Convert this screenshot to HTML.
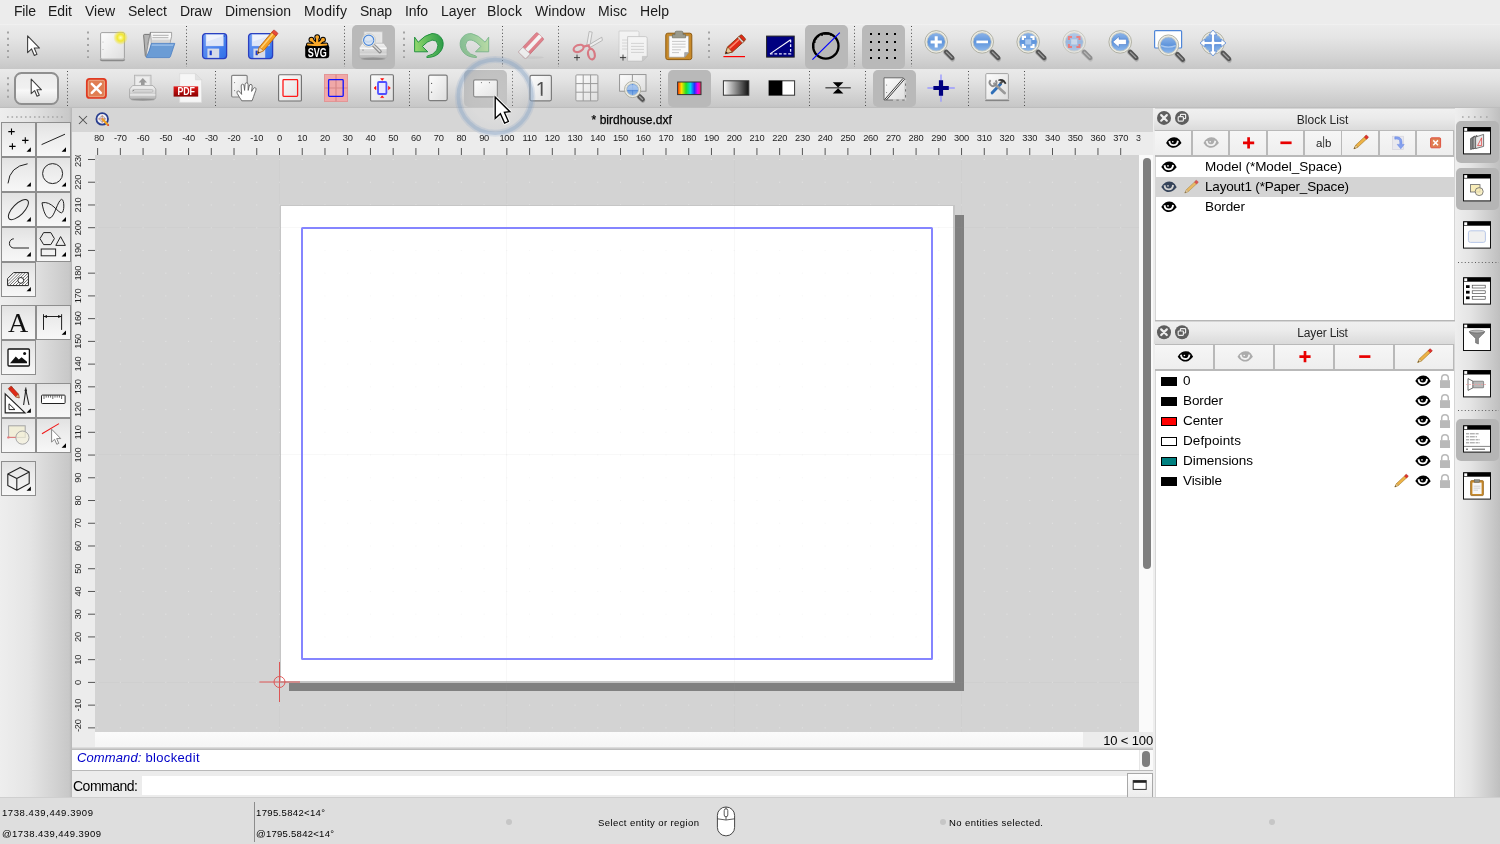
<!DOCTYPE html><html><head><meta charset="utf-8"><title>QCAD - birdhouse.dxf</title><style>
html,body{margin:0;padding:0;}
body{width:1500px;height:844px;position:relative;overflow:hidden;will-change:transform;background:#ececec;font-family:"Liberation Sans",sans-serif;}
div{position:absolute;}
.t{position:absolute;white-space:pre;}
svg{position:absolute;left:0;top:0;}
</style></head><body>
<div style="left:0px;top:0px;width:1500px;height:24px;background:#ececec;"></div><span class="t" id="m0" style="left:14px;top:1.80px;font-size:14px;line-height:18px;color:#1a1a1a;letter-spacing:-0.188px;">File</span><span class="t" id="m1" style="left:48px;top:1.80px;font-size:14px;line-height:18px;color:#1a1a1a;letter-spacing:-0.046px;">Edit</span><span class="t" id="m2" style="left:85px;top:1.80px;font-size:14px;line-height:18px;color:#1a1a1a;letter-spacing:-0.031px;">View</span><span class="t" id="m3" style="left:128px;top:1.80px;font-size:14px;line-height:18px;color:#1a1a1a;letter-spacing:0.016px;">Select</span><span class="t" id="m4" style="left:180px;top:1.80px;font-size:14px;line-height:18px;color:#1a1a1a;letter-spacing:-0.224px;">Draw</span><span class="t" id="m5" style="left:225px;top:1.80px;font-size:14px;line-height:18px;color:#1a1a1a;letter-spacing:-0.018px;">Dimension</span><span class="t" id="m6" style="left:304px;top:1.80px;font-size:14px;line-height:18px;color:#1a1a1a;letter-spacing:0.351px;">Modify</span><span class="t" id="m7" style="left:360px;top:1.80px;font-size:14px;line-height:18px;color:#1a1a1a;letter-spacing:-0.234px;">Snap</span><span class="t" id="m8" style="left:405px;top:1.80px;font-size:14px;line-height:18px;color:#1a1a1a;letter-spacing:-0.120px;">Info</span><span class="t" id="m9" style="left:441px;top:1.80px;font-size:14px;line-height:18px;color:#1a1a1a;letter-spacing:-0.008px;">Layer</span><span class="t" id="m10" style="left:487px;top:1.80px;font-size:14px;line-height:18px;color:#1a1a1a;letter-spacing:0.188px;">Block</span><span class="t" id="m11" style="left:535px;top:1.80px;font-size:14px;line-height:18px;color:#1a1a1a;letter-spacing:0.041px;">Window</span><span class="t" id="m12" style="left:598px;top:1.80px;font-size:14px;line-height:18px;color:#1a1a1a;letter-spacing:0.073px;">Misc</span><span class="t" id="m13" style="left:640px;top:1.80px;font-size:14px;line-height:18px;color:#1a1a1a;letter-spacing:0.067px;">Help</span><div style="left:0px;top:24px;width:1500px;height:44.6px;background:linear-gradient(#f3f3f3,#ebebeb 3%,#e5e5e5 30%,#d3d3d3 75%,#c7c7c7);"></div><div style="left:0px;top:68.6px;width:1500px;height:1px;background:#eeeeee;"></div><div style="left:0px;top:69.4px;width:1500px;height:37px;background:linear-gradient(#eaeaea,#e3e3e3 30%,#d1d1d1 75%,#c8c8c8);"></div><div style="left:0px;top:106.3px;width:1500px;height:1.8px;background:linear-gradient(#cbcbcb,#b9b9b9);"></div><div style="left:0px;top:108px;width:1500px;height:690px;background:#d5d5d5;"></div><div style="left:352px;top:24.5px;width:43px;height:44px;background:#b9b9b9;border-radius:5px;"></div><div style="left:805px;top:24.5px;width:43px;height:44px;background:#b9b9b9;border-radius:5px;"></div><div style="left:861.7px;top:24.5px;width:43px;height:44px;background:#b9b9b9;border-radius:5px;"></div><div style="left:464px;top:70px;width:42.5px;height:37px;background:#b9b9b9;border-radius:5px;"></div><div style="left:668px;top:70px;width:42.5px;height:37px;background:#b9b9b9;border-radius:5px;"></div><div style="left:873px;top:70px;width:42.5px;height:37px;background:#b9b9b9;border-radius:5px;"></div><div style="left:14px;top:72px;width:44.8px;height:32.8px;box-sizing:border-box;border:2px solid #8f8f8f;border-radius:7.5px;background:linear-gradient(#ececec,#f0f0f0 48%,#f8f8f8 56%,#dfdfdf);"></div><div style="left:0px;top:108px;width:72px;height:690px;background:linear-gradient(90deg,#eeeeee,#e5e5e5 40%,#c8c8c8 96%,#b6b6b6);"></div><div style="left:1.1px;top:122.1px;width:34.95px;height:34.95px;box-sizing:border-box;border:1px solid #8e8e8e;background:linear-gradient(#e2e2e2,#ebebeb 35%,#f7f7f7);"></div><div style="left:35.95px;top:122.1px;width:34.95px;height:34.95px;box-sizing:border-box;border:1px solid #8e8e8e;background:linear-gradient(#e2e2e2,#ebebeb 35%,#f7f7f7);"></div><div style="left:1.1px;top:157.0px;width:34.95px;height:34.95px;box-sizing:border-box;border:1px solid #8e8e8e;background:linear-gradient(#e2e2e2,#ebebeb 35%,#f7f7f7);"></div><div style="left:35.95px;top:157.0px;width:34.95px;height:34.95px;box-sizing:border-box;border:1px solid #8e8e8e;background:linear-gradient(#e2e2e2,#ebebeb 35%,#f7f7f7);"></div><div style="left:1.1px;top:191.9px;width:34.95px;height:34.95px;box-sizing:border-box;border:1px solid #8e8e8e;background:linear-gradient(#e2e2e2,#ebebeb 35%,#f7f7f7);"></div><div style="left:35.95px;top:191.9px;width:34.95px;height:34.95px;box-sizing:border-box;border:1px solid #8e8e8e;background:linear-gradient(#e2e2e2,#ebebeb 35%,#f7f7f7);"></div><div style="left:1.1px;top:226.8px;width:34.95px;height:34.95px;box-sizing:border-box;border:1px solid #8e8e8e;background:linear-gradient(#e2e2e2,#ebebeb 35%,#f7f7f7);"></div><div style="left:35.95px;top:226.8px;width:34.95px;height:34.95px;box-sizing:border-box;border:1px solid #8e8e8e;background:linear-gradient(#e2e2e2,#ebebeb 35%,#f7f7f7);"></div><div style="left:1.1px;top:261.7px;width:34.95px;height:34.95px;box-sizing:border-box;border:1px solid #8e8e8e;background:linear-gradient(#e2e2e2,#ebebeb 35%,#f7f7f7);"></div><div style="left:1.1px;top:305.1px;width:34.95px;height:34.95px;box-sizing:border-box;border:1px solid #8e8e8e;background:linear-gradient(#e2e2e2,#ebebeb 35%,#f7f7f7);"></div><div style="left:35.95px;top:305.1px;width:34.95px;height:34.95px;box-sizing:border-box;border:1px solid #8e8e8e;background:linear-gradient(#e2e2e2,#ebebeb 35%,#f7f7f7);"></div><div style="left:1.1px;top:340.0px;width:34.95px;height:34.95px;box-sizing:border-box;border:1px solid #8e8e8e;background:linear-gradient(#e2e2e2,#ebebeb 35%,#f7f7f7);"></div><div style="left:1.1px;top:383.1px;width:34.95px;height:34.95px;box-sizing:border-box;border:1px solid #8e8e8e;background:linear-gradient(#e2e2e2,#ebebeb 35%,#f7f7f7);"></div><div style="left:35.95px;top:383.1px;width:34.95px;height:34.95px;box-sizing:border-box;border:1px solid #8e8e8e;background:linear-gradient(#e2e2e2,#ebebeb 35%,#f7f7f7);"></div><div style="left:1.1px;top:418.0px;width:34.95px;height:34.95px;box-sizing:border-box;border:1px solid #8e8e8e;background:linear-gradient(#e2e2e2,#ebebeb 35%,#f7f7f7);"></div><div style="left:35.95px;top:418.0px;width:34.95px;height:34.95px;box-sizing:border-box;border:1px solid #8e8e8e;background:linear-gradient(#e2e2e2,#ebebeb 35%,#f7f7f7);"></div><div style="left:1.1px;top:461.1px;width:34.95px;height:34.95px;box-sizing:border-box;border:1px solid #8e8e8e;background:linear-gradient(#e2e2e2,#ebebeb 35%,#f7f7f7);"></div><div style="left:72px;top:108px;width:1081px;height:23.5px;background:#d6d6d6;"></div><span class="t" id="title" style="left:591.6px;top:112.00px;font-size:12px;line-height:16px;color:#000;letter-spacing:0.017px;-webkit-text-stroke:0.25px #000;">* birdhouse.dxf</span><div style="left:72px;top:131.5px;width:1081px;height:23.5px;background:#ececec;"></div><div style="left:72px;top:155px;width:23px;height:577px;background:#ececec;"></div><div style="left:95px;top:155px;width:1044px;height:577px;background:#d3d3d3;overflow:hidden;"><div style="left:0;top:0;width:1044px;height:577px;background-image:radial-gradient(circle,rgba(255,255,255,0.38) 0.55px,rgba(255,255,255,0) 1px);background-size:22.735px 22.735px;background-position:-8.75px -6.87px;"></div><div style="left:194px;top:60px;width:674.8px;height:476.2px;background:#808080;"></div><div style="left:185px;top:50px;width:675.2px;height:478px;background:#c6c6c6;"></div><div style="left:186px;top:51px;width:672.2px;height:475px;background-color:#fff;background-image:radial-gradient(circle,rgba(0,0,0,0.035) 0.55px,rgba(0,0,0,0) 1px);background-size:22.735px 22.735px;background-position:9.87px 10.33px;"></div><div style="left:411.0px;top:0px;width:1px;height:577px;background:rgba(150,150,150,0.07);"></div><div style="left:638.5px;top:0px;width:1px;height:577px;background:rgba(150,150,150,0.07);"></div><div style="left:866.0px;top:0px;width:1px;height:577px;background:rgba(150,150,150,0.07);"></div><div style="left:0px;top:71.5px;width:1045px;height:1px;background:rgba(150,150,150,0.07);"></div><div style="left:0px;top:299.0px;width:1045px;height:1px;background:rgba(150,150,150,0.07);"></div><div style="left:184px;top:0px;width:1px;height:577px;background:rgba(150,150,150,0.07);"></div><div style="left:0px;top:526.5px;width:1045px;height:1px;background:rgba(150,150,150,0.07);"></div><div style="left:206.3px;top:71.6px;width:631.6px;height:433.7px;box-sizing:border-box;border:2.5px solid #8585ff;border-radius:1.5px;"></div></div><div style="left:1139px;top:155px;width:14.3px;height:577px;background:#fafafa;"></div><div style="left:1143px;top:158px;width:8.2px;height:410.8px;background:#7f7f7f;border-radius:4.1px;"></div><div style="left:95px;top:732px;width:1044px;height:14.5px;background:linear-gradient(#fbfbfb,#f5f5f5);"></div><div style="left:72px;top:732px;width:23px;height:14.5px;background:#ececec;"></div><div style="left:1083px;top:732px;width:70.3px;height:14.5px;background:#ececec;"></div><span class="t" id="zoomlbl" style="right:347px;top:731.50px;font-size:13px;line-height:17px;color:#000;letter-spacing:-0.139px;">10 &lt; 100</span><div style="left:72px;top:746.5px;width:1081.3px;height:3px;background:linear-gradient(#e4e4e4,#b4b4b4);"></div><div style="left:72px;top:749.5px;width:1081.3px;height:20.5px;background:#fff;"></div><div style="left:72px;top:770px;width:1081.3px;height:1px;background:#b9b9b9;"></div><div style="left:72px;top:771px;width:1081.3px;height:27px;background:#ececec;"></div><div style="left:1138.5px;top:749.5px;width:14.8px;height:20.5px;background:#fafafa;border-left:1px solid #e6e6e6;"></div><div style="left:1142.2px;top:750.5px;width:8px;height:16.5px;background:#7f7f7f;border-radius:4px;"></div><span class="t" id="cmdhist1" style="left:77px;top:749.40px;font-size:13px;line-height:17px;color:#0000c8;letter-spacing:0.117px;font-style:italic;">Command:</span><span class="t" id="cmdhist2" style="left:145.5px;top:749.40px;font-size:13px;line-height:17px;color:#0000c8;letter-spacing:0.336px;">blockedit</span><span class="t" id="cmdlbl" style="left:73px;top:776.50px;font-size:14px;line-height:18px;color:#000;letter-spacing:-0.498px;">Command:</span><div style="left:142px;top:776px;width:985px;height:18.5px;background:#fff;"></div><div style="left:1127px;top:772.5px;width:26px;height:25px;box-sizing:border-box;border:1px solid #a8a8a8;background:linear-gradient(#fdfdfd,#ececec);"></div><div style="left:1153.3px;top:108px;width:2.2px;height:690px;background:#eeeeee;"></div><div style="left:1155px;top:108px;width:1px;height:690px;background:#d6d6d6;"></div><div style="left:1154px;top:108.5px;width:300.5px;height:22px;background:linear-gradient(#f0f0f0,#ebebeb 40%,#dadada);"></div><span class="t" id="blt" style="left:1322.5px;transform:translateX(-50%);top:111.80px;font-size:12px;line-height:16px;color:#262626;letter-spacing:0.016px;">Block List</span><div style="left:1154.8px;top:130px;width:299.7px;height:26.8px;background:#b9b9b9;"></div><div style="left:1155.3px;top:130.8px;width:35.7px;height:24px;background:linear-gradient(#f6f6f6,#eeeeee);"></div><div style="left:1192.7px;top:130.8px;width:35.7px;height:24px;background:linear-gradient(#f6f6f6,#eeeeee);"></div><div style="left:1230.1px;top:130.8px;width:35.7px;height:24px;background:linear-gradient(#f6f6f6,#eeeeee);"></div><div style="left:1267.5px;top:130.8px;width:35.7px;height:24px;background:linear-gradient(#f6f6f6,#eeeeee);"></div><div style="left:1304.9px;top:130.8px;width:35.7px;height:24px;background:linear-gradient(#f6f6f6,#eeeeee);"></div><div style="left:1342.3px;top:130.8px;width:35.7px;height:24px;background:linear-gradient(#f6f6f6,#eeeeee);"></div><div style="left:1379.7px;top:130.8px;width:35.7px;height:24px;background:linear-gradient(#f6f6f6,#eeeeee);"></div><div style="left:1417.1px;top:130.8px;width:35.7px;height:24px;background:linear-gradient(#f6f6f6,#eeeeee);"></div><div style="left:1156px;top:156.8px;width:298px;height:163.4px;background:#fff;"></div><div style="left:1156px;top:177px;width:298px;height:20px;background:#d4d4d4;"></div><span class="t" id="b0" style="left:1205px;top:158.05px;font-size:13.5px;line-height:17.5px;color:#000;letter-spacing:-0.017px;">Model (*Model_Space)</span><span class="t" id="b1" style="left:1205px;top:178.05px;font-size:13.5px;line-height:17.5px;color:#000;letter-spacing:-0.184px;">Layout1 (*Paper_Space)</span><span class="t" id="b2" style="left:1205px;top:198.05px;font-size:13.5px;line-height:17.5px;color:#000;letter-spacing:-0.106px;">Border</span><div style="left:1154.5px;top:320.2px;width:300px;height:1.3px;background:#b6b6b6;"></div><div style="left:1154px;top:321.5px;width:300.5px;height:22.5px;background:linear-gradient(#f0f0f0,#ebebeb 40%,#dadada);"></div><span class="t" id="llt" style="left:1322.5px;transform:translateX(-50%);top:325.05px;font-size:12px;line-height:16px;color:#262626;letter-spacing:-0.170px;">Layer List</span><div style="left:1154.8px;top:343.8px;width:299.7px;height:26.9px;background:#b9b9b9;"></div><div style="left:1155.3px;top:344.6px;width:58.0px;height:24.2px;background:linear-gradient(#f6f6f6,#eeeeee);"></div><div style="left:1215.1px;top:344.6px;width:58.0px;height:24.2px;background:linear-gradient(#f6f6f6,#eeeeee);"></div><div style="left:1275.0px;top:344.6px;width:58.0px;height:24.2px;background:linear-gradient(#f6f6f6,#eeeeee);"></div><div style="left:1334.8px;top:344.6px;width:58.0px;height:24.2px;background:linear-gradient(#f6f6f6,#eeeeee);"></div><div style="left:1394.7px;top:344.6px;width:58.0px;height:24.2px;background:linear-gradient(#f6f6f6,#eeeeee);"></div><div style="left:1156px;top:370.7px;width:298px;height:427.3px;background:#fff;"></div><div style="left:1161px;top:376.5px;width:16px;height:9px;box-sizing:border-box;border:1px solid #000;background:#000;"></div><span class="t" id="l0" style="left:1183px;top:372.05px;font-size:13.5px;line-height:17.5px;color:#000;letter-spacing:0.484px;">0</span><div style="left:1161px;top:396.5px;width:16px;height:9px;box-sizing:border-box;border:1px solid #000;background:#000;"></div><span class="t" id="l1" style="left:1183px;top:392.05px;font-size:13.5px;line-height:17.5px;color:#000;letter-spacing:-0.106px;">Border</span><div style="left:1161px;top:416.5px;width:16px;height:9px;box-sizing:border-box;border:1px solid #000;background:#ff0000;"></div><span class="t" id="l2" style="left:1183px;top:412.05px;font-size:13.5px;line-height:17.5px;color:#000;letter-spacing:-0.106px;">Center</span><div style="left:1161px;top:436.5px;width:16px;height:9px;box-sizing:border-box;border:1px solid #000;background:#fff;"></div><span class="t" id="l3" style="left:1183px;top:432.05px;font-size:13.5px;line-height:17.5px;color:#000;letter-spacing:0.119px;">Defpoints</span><div style="left:1161px;top:456.5px;width:16px;height:9px;box-sizing:border-box;border:1px solid #000;background:#008080;"></div><span class="t" id="l4" style="left:1183px;top:452.05px;font-size:13.5px;line-height:17.5px;color:#000;letter-spacing:-0.059px;">Dimensions</span><div style="left:1161px;top:476.5px;width:16px;height:9px;box-sizing:border-box;border:1px solid #000;background:#000;"></div><span class="t" id="l5" style="left:1183px;top:472.05px;font-size:13.5px;line-height:17.5px;color:#000;letter-spacing:-0.089px;">Visible</span><div style="left:1454.5px;top:108px;width:45.5px;height:690px;background:linear-gradient(90deg,#eeeeee,#e4e4e4 35%,#bfbfbf);"></div><div style="left:1456px;top:120.5px;width:43px;height:42px;background:#b5b5b5;border-radius:5px;"></div><div style="left:1456px;top:167.5px;width:43px;height:42px;background:#b5b5b5;border-radius:5px;"></div><div style="left:1456px;top:418.5px;width:43px;height:42px;background:#b5b5b5;border-radius:5px;"></div><div style="left:0px;top:798px;width:1500px;height:46px;background:#dedede;"></div><div style="left:0px;top:797.4px;width:1500px;height:1px;background:#cfcfcf;"></div><div style="left:253.5px;top:802px;width:1px;height:40px;background:#8c8c8c;"></div><span class="t" id="s0" style="left:2px;top:805.75px;font-size:9.5px;line-height:13.5px;color:#000;letter-spacing:0.569px;">1738.439,449.3909</span><span class="t" id="s1" style="left:2px;top:826.55px;font-size:9.5px;line-height:13.5px;color:#000;letter-spacing:0.439px;">@1738.439,449.3909</span><span class="t" id="s2" style="left:256px;top:805.75px;font-size:9.5px;line-height:13.5px;color:#000;letter-spacing:0.347px;">1795.5842&lt;14°</span><span class="t" id="s3" style="left:256px;top:826.55px;font-size:9.5px;line-height:13.5px;color:#000;letter-spacing:0.271px;">@1795.5842&lt;14°</span><span class="t" id="s4" style="left:598px;top:815.75px;font-size:9.5px;line-height:13.5px;color:#000;letter-spacing:0.414px;">Select entity or region</span><span class="t" id="s5" style="left:949px;top:815.75px;font-size:9.5px;line-height:13.5px;color:#000;letter-spacing:0.422px;">No entities selected.</span><div style="left:506px;top:819px;width:6px;height:6px;background:#c6c6c6;border-radius:3px;"></div><div style="left:940px;top:819px;width:6px;height:6px;background:#c6c6c6;border-radius:3px;"></div><div style="left:1269px;top:819px;width:6px;height:6px;background:#c6c6c6;border-radius:3px;"></div>
<svg width="1500" height="844" viewBox="0 0 1500 844"><defs>
<linearGradient id="gPage" x1="0" y1="0" x2="1" y2="1"><stop offset="0" stop-color="#fdfdfd"/><stop offset="1" stop-color="#dedede"/></linearGradient>
<linearGradient id="gBlue" x1="0" y1="0" x2="0" y2="1"><stop offset="0" stop-color="#9cc0ec"/><stop offset="1" stop-color="#4f86d0"/></linearGradient>
<linearGradient id="gLens" x1="0" y1="0" x2="0" y2="1"><stop offset="0" stop-color="#8db4e8"/><stop offset="0.5" stop-color="#5f95dc"/><stop offset="1" stop-color="#8fb8ea"/></linearGradient>
<linearGradient id="gFloppy" x1="0" y1="0" x2="1" y2="1"><stop offset="0" stop-color="#6f9cf5"/><stop offset="1" stop-color="#2f6fe8"/></linearGradient>
<linearGradient id="gGreen" x1="0" y1="0" x2="1" y2="1"><stop offset="0" stop-color="#7fd07a"/><stop offset="1" stop-color="#1d8f35"/></linearGradient>
<linearGradient id="gRain" x1="0" y1="0" x2="1" y2="0"><stop offset="0" stop-color="#ff3000"/><stop offset="0.17" stop-color="#ffe000"/><stop offset="0.36" stop-color="#20e020"/><stop offset="0.55" stop-color="#00d8e8"/><stop offset="0.72" stop-color="#2030ff"/><stop offset="0.86" stop-color="#f000f0"/><stop offset="1" stop-color="#ff2050"/></linearGradient>
<linearGradient id="gGray" x1="0" y1="0" x2="1" y2="0"><stop offset="0" stop-color="#fff"/><stop offset="1" stop-color="#111"/></linearGradient>
<linearGradient id="gPrn" x1="0" y1="0" x2="0" y2="1"><stop offset="0" stop-color="#f4f4f4"/><stop offset="1" stop-color="#b9b9b9"/></linearGradient>
<linearGradient id="gPdf" x1="0" y1="0" x2="0" y2="1"><stop offset="0" stop-color="#e01818"/><stop offset="1" stop-color="#8a0000"/></linearGradient>
<radialGradient id="gGlow"><stop offset="0" stop-color="#ffffc0"/><stop offset="0.45" stop-color="#f2e830"/><stop offset="1" stop-color="#f0e020" stop-opacity="0"/></radialGradient>
<clipPath id="clipH"><rect x="94.4" y="131" width="1046.1" height="24"/></clipPath>
<clipPath id="clipV"><rect x="72" y="155" width="23" height="578.5"/></clipPath>
</defs>
<line x1="8" y1="31.6" x2="8" y2="58" stroke="#a3a3a3" stroke-width="2" stroke-dasharray="2 4.15"/>
<line x1="88" y1="31.6" x2="88" y2="58" stroke="#a3a3a3" stroke-width="2" stroke-dasharray="2 4.15"/>
<line x1="404" y1="31.6" x2="404" y2="58" stroke="#a3a3a3" stroke-width="2" stroke-dasharray="2 4.15"/>
<line x1="709" y1="31.6" x2="709" y2="58" stroke="#a3a3a3" stroke-width="2" stroke-dasharray="2 4.15"/>
<line x1="186.5" y1="26" x2="186.5" y2="67" stroke="#4a4a4a" stroke-width="1" stroke-dasharray="1 2.4"/>
<line x1="344.5" y1="26" x2="344.5" y2="67" stroke="#4a4a4a" stroke-width="1" stroke-dasharray="1 2.4"/>
<line x1="502.5" y1="26" x2="502.5" y2="67" stroke="#4a4a4a" stroke-width="1" stroke-dasharray="1 2.4"/>
<line x1="558.5" y1="26" x2="558.5" y2="67" stroke="#4a4a4a" stroke-width="1" stroke-dasharray="1 2.4"/>
<line x1="854.5" y1="26" x2="854.5" y2="67" stroke="#4a4a4a" stroke-width="1" stroke-dasharray="1 2.4"/>
<line x1="911.5" y1="26" x2="911.5" y2="67" stroke="#4a4a4a" stroke-width="1" stroke-dasharray="1 2.4"/>
<line x1="8" y1="77.2" x2="8" y2="98" stroke="#a3a3a3" stroke-width="2" stroke-dasharray="2 4.15"/>
<line x1="67.5" y1="71" x2="67.5" y2="106" stroke="#4a4a4a" stroke-width="1" stroke-dasharray="1 2.4"/>
<line x1="215.5" y1="71" x2="215.5" y2="106" stroke="#4a4a4a" stroke-width="1" stroke-dasharray="1 2.4"/>
<line x1="409.5" y1="71" x2="409.5" y2="106" stroke="#4a4a4a" stroke-width="1" stroke-dasharray="1 2.4"/>
<line x1="512.5" y1="71" x2="512.5" y2="106" stroke="#4a4a4a" stroke-width="1" stroke-dasharray="1 2.4"/>
<line x1="660.5" y1="71" x2="660.5" y2="106" stroke="#4a4a4a" stroke-width="1" stroke-dasharray="1 2.4"/>
<line x1="809.5" y1="71" x2="809.5" y2="106" stroke="#4a4a4a" stroke-width="1" stroke-dasharray="1 2.4"/>
<line x1="865.5" y1="71" x2="865.5" y2="106" stroke="#4a4a4a" stroke-width="1" stroke-dasharray="1 2.4"/>
<line x1="968.5" y1="71" x2="968.5" y2="106" stroke="#4a4a4a" stroke-width="1" stroke-dasharray="1 2.4"/>
<line x1="1024.5" y1="71" x2="1024.5" y2="106" stroke="#4a4a4a" stroke-width="1" stroke-dasharray="1 2.4"/>
<line x1="7" y1="117" x2="65" y2="117" stroke="#a6a6a6" stroke-width="1.6" stroke-dasharray="1.6 2.9"/>
<line x1="1462" y1="117" x2="1490" y2="117" stroke="#a6a6a6" stroke-width="1.6" stroke-dasharray="1.6 4.4"/>
<line x1="1458" y1="262.5" x2="1499" y2="262.5" stroke="#5a5a5a" stroke-width="1" stroke-dasharray="1 2.4"/>
<line x1="1458" y1="410.5" x2="1499" y2="410.5" stroke="#5a5a5a" stroke-width="1" stroke-dasharray="1 2.4"/>
<path transform="translate(27.6,35.8) scale(1.02)" d="M0,0 L0,16.5 L3.9,12.9 L6.6,19.3 L9.2,18.2 L6.5,12 L11.7,12 Z" fill="#fff" stroke="#404040" stroke-width="1.0784313725490198" stroke-linejoin="round"/>
<rect x="100.6" y="32.6" width="23.8" height="26.6" rx="1.3" fill="url(#gPage)" stroke="#a2a2a2" stroke-width="1"/>
<path d="M100.4,59.4 Q100.6,60.6 102,60.6 H123 Q124.4,60.6 124.6,59.4" stroke="#7e7e7e" stroke-width="1.3" fill="none" opacity="0.85"/>
<circle cx="103" cy="42" r="0.5" fill="#aaa"/><circle cx="103" cy="49.5" r="0.5" fill="#aaa"/>
<circle cx="120.6" cy="37.6" r="7.4" fill="url(#gGlow)"/>
<g>
<path d="M143.6,35.2 Q143.6,34.4 144.6,34.4 H149.4 L150.6,36 V56.6 H146.4 Q145.4,56.6 145.3,55.6 Z" fill="#b4b4b4" stroke="#6c6c6c" stroke-width="0.9" stroke-linejoin="round"/>
<path d="M150.4,32.4 H171.6 V36.4 L169.6,44.4 H147.6 Z" fill="#f8f8f8" stroke="#8e8e8e" stroke-width="0.8" stroke-linejoin="round"/>
<path d="M150.4,32.4 L146.2,54.6 L148,55.6 L151.6,44 Z" fill="#e9e9e9" stroke="#7c7c7c" stroke-width="0.7" stroke-linejoin="round"/>
<path d="M152.8,35.4 H168.6 M152.4,37.6 H168.4" stroke="#bdbdbd" stroke-width="1.2"/>
<path d="M151,39.4 H170.4 L169.4,43.4 H150.2Z" fill="#c9c9c9" opacity="0.75"/>
<path d="M151.4,43.4 H174.8 L170.4,56.6 Q170,57.6 169,57.6 H146.6 Q146,57.4 146.4,56.6 Q149.4,52 151.4,43.4Z" fill="#6b9cd5" stroke="#4a7fc4" stroke-width="0.8" stroke-linejoin="round"/>
<path d="M151.9,44.3 H173.6 L173,46 H151.5Z" fill="#9cc0ea" opacity="0.8"/>
</g>
<g transform="translate(202,33)" >
<rect x="0.6" y="0.6" width="24" height="25" rx="3" fill="url(#gFloppy)" stroke="#2a3fc0" stroke-width="1.3"/>
<rect x="4" y="1.6" width="17.2" height="11.3" fill="#eef2fc" stroke="#b8c8ee" stroke-width="0.5"/>
<path d="M4,9 L21.2,3 L21.2,12.9 L4,12.9Z" fill="#d9e2f8" opacity="0.8"/>
<rect x="5.4" y="15.6" width="11.8" height="9.2" fill="#d6dbe8"/>
<rect x="7.6" y="17.6" width="2.2" height="4.6" fill="#1c3fd0"/>
<rect x="21.8" y="2.6" width="1" height="1" fill="#1c3fb0"/>
</g>
<g transform="translate(248,33)" >
<rect x="0.6" y="0.6" width="24" height="25" rx="3" fill="url(#gFloppy)" stroke="#2a3fc0" stroke-width="1.3"/>
<rect x="4" y="1.6" width="17.2" height="11.3" fill="#eef2fc" stroke="#b8c8ee" stroke-width="0.5"/>
<path d="M4,9 L21.2,3 L21.2,12.9 L4,12.9Z" fill="#d9e2f8" opacity="0.8"/>
<rect x="5.4" y="15.6" width="11.8" height="9.2" fill="#d6dbe8"/>
<rect x="7.6" y="17.6" width="2.2" height="4.6" fill="#1c3fd0"/>
<rect x="21.8" y="2.6" width="1" height="1" fill="#1c3fb0"/>
</g>
<g transform="translate(266,43.5)" ><g transform="rotate(40)">
<path d="M-2.8,-13 L2.8,-13 L2.8,7 L0,13 L-2.8,7Z" fill="#f5a020" stroke="#b86810" stroke-width="0.8"/>
<path d="M-0.9,-12 L-0.9,7.5" stroke="#ffd27a" stroke-width="1.4"/>
<rect x="-2.8" y="-15.6" width="5.6" height="3.4" rx="1" fill="#e84a3a" stroke="#b02a20" stroke-width="0.6"/>
<path d="M-2.8,7 L0,13 L2.8,7Z" fill="#f0d8b0" stroke="#b86810" stroke-width="0.6"/>
<path d="M-1,10.8 L0,13 L1,10.8Z" fill="#333"/></g></g>
<g transform="translate(305,34)" >
<path d="M2.6,10.8 H21.8 Q24.2,10.8 24.2,13.2 V21.8 Q24.2,24.2 21.8,24.2 H2.6 Q0.2,24.2 0.2,21.8 V13.2 Q0.2,10.8 2.6,10.8Z" fill="#000"/>
<g stroke="#000" stroke-linecap="round" fill="none">
<path d="M12.2,11.4 V3.2 M12.2,11.4 L6.5,5.8 M12.2,11.4 L17.9,5.8" stroke-width="4.4"/>
<path d="M12.2,11.2 L3,10.6 M12.2,11.2 L21.4,10.6" stroke-width="4"/>
<circle cx="12.2" cy="3.1" r="2.9" fill="#000" stroke="none"/><circle cx="6.4" cy="5.7" r="2.9" fill="#000" stroke="none"/><circle cx="18" cy="5.7" r="2.9" fill="#000" stroke="none"/>
</g>
<g stroke="#f9a829" stroke-linecap="round" fill="none">
<path d="M12.2,11.4 V3.2 M12.2,11.4 L6.5,5.8 M12.2,11.4 L17.9,5.8" stroke-width="2.3"/>
<path d="M12.2,11.2 L3,10.6 M12.2,11.2 L21.4,10.6" stroke-width="2"/>
<circle cx="12.2" cy="3.1" r="1.9" fill="#f9a829" stroke="none"/><circle cx="6.4" cy="5.7" r="1.9" fill="#f9a829" stroke="none"/><circle cx="18" cy="5.7" r="1.9" fill="#f9a829" stroke="none"/>
<path d="M8.4,10.6 L12.2,7.4 L16,10.6Z" fill="#f9a829" stroke="none"/>
</g>
<rect x="0.6" y="12.2" width="23.2" height="3" fill="#000"/>
<text x="12.3" y="23.4" font-family="Liberation Sans, sans-serif" font-weight="bold" font-size="13.6" fill="#fff" text-anchor="middle" textLength="19" lengthAdjust="spacingAndGlyphs">SVG</text>
</g>
<g transform="translate(359,32)" >
<rect x="5" y="-0.2" width="18.3" height="13" fill="#ececec" stroke="#c6c6c6" stroke-width="0.8"/>
<rect x="12" y="1.4" width="9.6" height="9" fill="#e2e2e2" opacity="0.8"/>
<path d="M3.2,11.2 L24.8,11.2 L28,15.4 L28,24.2 Q28,25.8 26.4,25.8 L1.9,25.8 Q0.3,25.8 0.3,24.2 L0.3,15.4Z" fill="url(#gPrn)" stroke="#b2b2b2" stroke-width="0.7"/>
<rect x="0.8" y="15.6" width="26.8" height="1.3" fill="#fff" opacity="0.9"/>
<rect x="0.8" y="21.6" width="26.8" height="1" fill="#fff" opacity="0.6"/>
<circle cx="4" cy="18" r="0.6" fill="#666"/>
<ellipse cx="14.2" cy="26.8" rx="12.4" ry="1.2" fill="#000" opacity="0.2"/>
<line x1="14.2" y1="13" x2="21" y2="19.6" stroke="#8e8e8e" stroke-width="3.6" stroke-linecap="round"/>
<line x1="14.6" y1="13.2" x2="20.8" y2="19.2" stroke="#d9d9d9" stroke-width="1.5" stroke-linecap="round"/>
<circle cx="9.7" cy="8.3" r="6.8" fill="#f1f1ee" stroke="#c4c4bc" stroke-width="0.8"/>
<circle cx="9.7" cy="8.3" r="5.1" fill="#dbe6f4" stroke="#4a86d8" stroke-width="1.2"/>
<path d="M5.6,8.8 Q9.6,11.6 14,8" stroke="#c2d6ee" stroke-width="2" fill="none" opacity="0.9"/>
</g>
<linearGradient id="gUndo" gradientUnits="userSpaceOnUse" x1="414" y1="48" x2="444" y2="44"><stop offset="0" stop-color="#97da6e"/><stop offset="0.45" stop-color="#62bd5c"/><stop offset="1" stop-color="#2c9a48"/></linearGradient>
<path d="M414.6,37.1 L418.2,42.2 Q424.5,35 432,33.5 Q439.5,33.4 442.5,40 Q444.6,46 440.4,51.8 Q436,57.4 426.9,57.5 Q426.2,56.6 427.5,56 Q433.4,55 436.8,50 Q439.4,44.8 436.2,41 Q432.4,38.6 427.2,42.2 L422.4,46.4 L427.8,51.8 L414.6,51.8 Z" fill="url(#gUndo)" stroke="#178a38" stroke-width="0.9" stroke-linejoin="round"/>
<g transform="translate(903.3,0) scale(-1,1)" opacity="0.5"><path d="M414.6,37.1 L418.2,42.2 Q424.5,35 432,33.5 Q439.5,33.4 442.5,40 Q444.6,46 440.4,51.8 Q436,57.4 426.9,57.5 Q426.2,56.6 427.5,56 Q433.4,55 436.8,50 Q439.4,44.8 436.2,41 Q432.4,38.6 427.2,42.2 L422.4,46.4 L427.8,51.8 L414.6,51.8 Z" fill="url(#gUndo)" stroke="#178a38" stroke-width="0.9" stroke-linejoin="round"/></g>
<g transform="translate(518,32)" ><g opacity="0.62">
<ellipse cx="15" cy="25.6" rx="11" ry="1.4" fill="#b9b9b9" opacity="0.6"/>
<g transform="translate(13.5,13.2) rotate(-47)">
<rect x="-14" y="-5" width="27" height="10" rx="1.2" fill="#e04858" stroke="#b02838" stroke-width="0.7"/>
<rect x="-7" y="-1.9" width="20" height="4" fill="#fff"/>
<rect x="-14" y="-5" width="6.6" height="10" rx="1" fill="#fafafa" stroke="#aaa" stroke-width="0.7"/>
</g></g></g>
<g transform="translate(572,30)" ><g opacity="0.62">
<path d="M17.2,1.5 L20.2,2.2 L17.6,17 L14.6,16.2Z" fill="#f4f4f4" stroke="#8a8a8a" stroke-width="0.8"/>
<path d="M29.8,7.2 L30.4,10.4 L18.6,17.2 L16.4,15.2Z" fill="#f4f4f4" stroke="#8a8a8a" stroke-width="0.8"/>
<ellipse cx="6.6" cy="18.4" rx="5.2" ry="3.3" transform="rotate(-22 6.6 18.4)" fill="none" stroke="#d84050" stroke-width="2.2"/>
<ellipse cx="19.4" cy="24.2" rx="3.3" ry="5.3" transform="rotate(-12 19.4 24.2)" fill="none" stroke="#d84050" stroke-width="2.2"/>
<path d="M11.4,16.6 L16.6,15.4 L18.2,19.2" fill="none" stroke="#d84050" stroke-width="2.2" stroke-linejoin="round"/>
</g>
<path d="M2,27.6 H8 M5,24.6 V30.6" stroke="#333" stroke-width="0.9"/></g>
<g transform="translate(618,30)" ><g opacity="0.75">
<path d="M1,1 H19.5 Q21,1 21,2.5 V27 H1Z" fill="#f7f7f7" stroke="#c4c4c4" stroke-width="0.8"/>
<path d="M4,10 H12 M4,13 H12 M4,16 H12 M4,19 H12" stroke="#d2d2d2" stroke-width="1"/>
<path d="M9.6,6.6 H27.5 Q29.2,6.6 29.2,8.2 V26.4 L24.4,31.2 H9.6Z" fill="#fafafa" stroke="#b5b5b5" stroke-width="0.8"/>
<path d="M13,13.4 H26 M13,16.4 H26 M13,19.4 H26 M13,22.4 H26" stroke="#cfcfcf" stroke-width="1"/>
<path d="M24.4,31.2 L24.4,26.4 L29.2,26.4Z" fill="#c9c9c9" stroke="#b5b5b5" stroke-width="0.6"/>
</g>
<path d="M2,27.6 H8 M5,24.6 V30.6" stroke="#333" stroke-width="0.9"/></g>
<g transform="translate(665,30)" >
<rect x="0.8" y="3.2" width="26" height="26.4" rx="2" fill="#c88a2a" stroke="#8e5a10" stroke-width="1"/>
<path d="M4,6 H23.6 V22.6 L19.6,27.2 H4Z" fill="#fafafa" stroke="#9a9a9a" stroke-width="0.6"/>
<path d="M7,11.4 H20.6 M7,14.2 H20.6 M7,17 H20.6 M7,19.8 H16 M7,22.6 H14" stroke="#c2c2c2" stroke-width="0.9"/>
<path d="M19.6,27.2 V22.6 H23.6Z" fill="#aaa" stroke="#8a8a8a" stroke-width="0.5"/>
<path d="M7.4,7.8 V4.6 H10 V2.6 Q10,1.2 11.6,1.2 H16.4 Q18,1.2 18,2.6 V4.6 H20.6 V7.8Z" fill="#9a9a8c" stroke="#6e6e62" stroke-width="0.7"/>
</g>
<g transform="translate(723,34)" >
<line x1="0.4" y1="22.6" x2="22" y2="22.6" stroke="#ff0000" stroke-width="1.2"/>
<g transform="translate(11.2,11.6) rotate(47.5) scale(0.95)">
<path d="M-3.7,-11 L3.7,-11 L3.7,6 L0,12.6 L-3.7,6Z" fill="#e02a18" stroke="#7a3a10" stroke-width="0.8"/>
<path d="M-1.2,-10 V6.4" stroke="#ff8a70" stroke-width="1.5"/>
<rect x="-3.7" y="-10.4" width="7.4" height="2.2" fill="#d8d8d8" stroke="#7a3a10" stroke-width="0.4"/>
<rect x="-3.7" y="-13.6" width="7.4" height="3.2" rx="1.5" fill="#e02a18" stroke="#7a3a10" stroke-width="0.7"/>
<path d="M-3.7,6 L0,12.6 L3.7,6Z" fill="#e8c898" stroke="#7a3a10" stroke-width="0.7"/>
<path d="M-1.1,10.2 L0,12.6 L1.1,10.2Z" fill="#222"/></g></g>
<g transform="translate(766,35.5)" >
<rect x="0.6" y="0.6" width="27.6" height="21" fill="#000080" stroke="#222" stroke-width="1"/>
<path d="M4,18.4 L24.6,4.2" stroke="#fff" stroke-width="1.1" fill="none"/>
<path d="M24.6,4.2 V18.4 H4" stroke="#e8e8ff" stroke-width="1.3" fill="none" stroke-dasharray="2.8 1.8"/></g>
<g transform="translate(812,31)" >
<circle cx="13.8" cy="14.9" r="12.7" fill="none" stroke="#000" stroke-width="2.3"/>
<path d="M1.2,17 V12.4 M2.4,12 V8.8 M4,8.4 V6.4 M6,6.2 V4.6 M9,3.6 H11 M11.4,2.6 H17.4 M17.8,3.6 H19.6" stroke="#000" stroke-width="2.2" fill="none"/>
<line x1="0.4" y1="28.6" x2="27.8" y2="1.6" stroke="#0000ff" stroke-width="1.2"/></g>
<g transform="translate(870,33)" ><rect x="0" y="0" width="2" height="2" fill="#000"/><rect x="0" y="8" width="2" height="2" fill="#000"/><rect x="0" y="16" width="2" height="2" fill="#000"/><rect x="0" y="24" width="2" height="2" fill="#000"/><rect x="8" y="0" width="2" height="2" fill="#000"/><rect x="8" y="8" width="2" height="2" fill="#000"/><rect x="8" y="16" width="2" height="2" fill="#000"/><rect x="8" y="24" width="2" height="2" fill="#000"/><rect x="16" y="0" width="2" height="2" fill="#000"/><rect x="16" y="8" width="2" height="2" fill="#000"/><rect x="16" y="16" width="2" height="2" fill="#000"/><rect x="16" y="24" width="2" height="2" fill="#000"/><rect x="24" y="0" width="2" height="2" fill="#000"/><rect x="24" y="8" width="2" height="2" fill="#000"/><rect x="24" y="16" width="2" height="2" fill="#000"/><rect x="24" y="24" width="2" height="2" fill="#000"/></g>
<g transform="translate(936.2,41.9)" opacity="1.0"><line x1="9.18" y1="10.20" x2="16.32" y2="17.14" stroke="#000" stroke-opacity="0.18" stroke-width="5" stroke-linecap="round"/><line x1="10.00" y1="10.00" x2="15.91" y2="15.91" stroke="#555" stroke-width="4.6" stroke-linecap="round"/><line x1="10.20" y1="10.20" x2="15.71" y2="15.71" stroke="#a0a0a0" stroke-width="1.3" stroke-linecap="round"/><circle r="11.299999999999999" fill="#ecece4" stroke="#a9a99c" stroke-width="0.9"/><circle r="9.2" fill="url(#gLens)" stroke="#c9c9bd" stroke-width="0.8"/><path d="M-5.6,0 H5.6 M0,-5.6 V5.6" stroke="#fff" stroke-width="3"/></g>
<g transform="translate(982.2,41.9)" opacity="1.0"><line x1="9.18" y1="10.20" x2="16.32" y2="17.14" stroke="#000" stroke-opacity="0.18" stroke-width="5" stroke-linecap="round"/><line x1="10.00" y1="10.00" x2="15.91" y2="15.91" stroke="#555" stroke-width="4.6" stroke-linecap="round"/><line x1="10.20" y1="10.20" x2="15.71" y2="15.71" stroke="#a0a0a0" stroke-width="1.3" stroke-linecap="round"/><circle r="11.299999999999999" fill="#ecece4" stroke="#a9a99c" stroke-width="0.9"/><circle r="9.2" fill="url(#gLens)" stroke="#c9c9bd" stroke-width="0.8"/><path d="M-5.8,0 H5.8" stroke="#fff" stroke-width="2.7"/></g>
<g transform="translate(1028.2,41.9)" opacity="1.0"><line x1="9.18" y1="10.20" x2="16.32" y2="17.14" stroke="#000" stroke-opacity="0.18" stroke-width="5" stroke-linecap="round"/><line x1="10.00" y1="10.00" x2="15.91" y2="15.91" stroke="#555" stroke-width="4.6" stroke-linecap="round"/><line x1="10.20" y1="10.20" x2="15.71" y2="15.71" stroke="#a0a0a0" stroke-width="1.3" stroke-linecap="round"/><circle r="11.299999999999999" fill="#ecece4" stroke="#a9a99c" stroke-width="0.9"/><circle r="9.2" fill="url(#gLens)" stroke="#c9c9bd" stroke-width="0.8"/><rect x="-3" y="-2.6" width="6" height="5.2" fill="#b4d0f2" opacity="0.85"/><path d="M-5.3,-2 V-5 H-2.2 M2.2,-5 H5.3 V-2 M5.3,2 V5 H2.2 M-2.2,5 H-5.3 V2" stroke="#fff" stroke-width="2.2" fill="none"/></g>
<g transform="translate(1074.2,41.9)" opacity="0.55"><line x1="9.18" y1="10.20" x2="16.32" y2="17.14" stroke="#000" stroke-opacity="0.18" stroke-width="5" stroke-linecap="round"/><line x1="10.00" y1="10.00" x2="15.91" y2="15.91" stroke="#555" stroke-width="4.6" stroke-linecap="round"/><line x1="10.20" y1="10.20" x2="15.71" y2="15.71" stroke="#a0a0a0" stroke-width="1.3" stroke-linecap="round"/><circle r="11.299999999999999" fill="#ecece4" stroke="#a9a99c" stroke-width="0.9"/><circle r="9.2" fill="url(#gLens)" stroke="#c9c9bd" stroke-width="0.8"/><rect x="-3" y="-2.6" width="6" height="5.2" fill="#c9dcf5" opacity="0.85"/><path d="M-5.3,-2 V-5 H-2.2 M2.2,-5 H5.3 V-2 M5.3,2 V5 H2.2 M-2.2,5 H-5.3 V2" stroke="#f03030" stroke-width="2" fill="none"/></g>
<g transform="translate(1120.2,41.9)" opacity="1.0"><line x1="9.18" y1="10.20" x2="16.32" y2="17.14" stroke="#000" stroke-opacity="0.18" stroke-width="5" stroke-linecap="round"/><line x1="10.00" y1="10.00" x2="15.91" y2="15.91" stroke="#555" stroke-width="4.6" stroke-linecap="round"/><line x1="10.20" y1="10.20" x2="15.71" y2="15.71" stroke="#a0a0a0" stroke-width="1.3" stroke-linecap="round"/><circle r="11.299999999999999" fill="#ecece4" stroke="#a9a99c" stroke-width="0.9"/><circle r="9.2" fill="url(#gLens)" stroke="#c9c9bd" stroke-width="0.8"/><path d="M-7.4,0 L-1.2,-5.4 V-2.6 H6.2 V2.6 H-1.2 V5.4Z" fill="#fff" stroke="#3a6cc0" stroke-width="0.5"/></g>
<rect x="1154.6" y="30.6" width="27" height="17.4" rx="1" fill="#fff" stroke="#4f86d8" stroke-width="1.2"/>
<g transform="translate(1168.4,45.2)" opacity="1.0"><line x1="8.28" y1="9.20" x2="14.72" y2="15.46" stroke="#000" stroke-opacity="0.18" stroke-width="5" stroke-linecap="round"/><line x1="9.02" y1="9.02" x2="14.35" y2="14.35" stroke="#555" stroke-width="4.6" stroke-linecap="round"/><line x1="9.20" y1="9.20" x2="14.17" y2="14.17" stroke="#a0a0a0" stroke-width="1.3" stroke-linecap="round"/><circle r="10.299999999999999" fill="#ecece4" stroke="#a9a99c" stroke-width="0.9"/><circle r="8.2" fill="url(#gLens)" stroke="#c9c9bd" stroke-width="0.8"/><path d="M-7.4,0.4 Q0,3.4 7.4,0.4" stroke="#a9c8f0" stroke-width="1.4" fill="none"/></g>
<g transform="translate(1213,43)" opacity="1.0"><line x1="9.18" y1="10.20" x2="16.32" y2="17.14" stroke="#000" stroke-opacity="0.18" stroke-width="5" stroke-linecap="round"/><line x1="10.00" y1="10.00" x2="15.91" y2="15.91" stroke="#555" stroke-width="4.6" stroke-linecap="round"/><line x1="10.20" y1="10.20" x2="15.71" y2="15.71" stroke="#a0a0a0" stroke-width="1.3" stroke-linecap="round"/><circle r="11.299999999999999" fill="#ecece4" stroke="#a9a99c" stroke-width="0.9"/><circle r="9.2" fill="url(#gLens)" stroke="#c9c9bd" stroke-width="0.8"/></g>
<g transform="translate(1213,43)"><path d="M0,-13 L4,-8.2 H1.6 V-1.6 H8.2 V-4 L13,0 L8.2,4 V1.6 H1.6 V8.2 H4 L0,13 L-4,8.2 H-1.6 V1.6 H-8.2 V4 L-13,0 L-8.2,-4 V-1.6 H-1.6 V-8.2 H-4Z" fill="#fff" stroke="#4a80d4" stroke-width="0.7" stroke-linejoin="round"/></g>
<path transform="translate(31.2,79.2) scale(0.88)" d="M0,0 L0,16.5 L3.9,12.9 L6.6,19.3 L9.2,18.2 L6.5,12 L11.7,12 Z" fill="#fff" stroke="#404040" stroke-width="1.25" stroke-linejoin="round"/>
<g transform="translate(86,78)" ><rect x="0.8" y="0.8" width="19.2" height="19.2" rx="2.8" fill="#e07e52" stroke="#e03a22" stroke-width="1.7"/><rect x="2.4" y="2.4" width="16" height="16" rx="1.4" fill="none" stroke="#eba481" stroke-width="1"/>
<path d="M5.8,5.8 L14.8,14.8 M14.8,5.8 L5.8,14.8" stroke="#fff" stroke-width="2.5" stroke-linecap="round"/></g>
<g transform="translate(129,74)" >
<rect x="5.4" y="1.2" width="16.6" height="12.4" fill="#dedede" stroke="#b0b0b0" stroke-width="0.8"/><rect x="7" y="2.8" width="13.4" height="9" fill="#ececec"/>
<path d="M13.8,4 L18,8.4 H15.6 V11 H12 V8.4 H9.6Z" fill="#9a9a9a"/>
<path d="M3.6,11.6 L24,11.6 L26.8,15 L26.8,23.4 Q26.8,25 25.2,25 L2.2,25 Q0.6,25 0.6,23.4 L0.6,15Z" fill="url(#gPrn)" stroke="#a2a2a2" stroke-width="0.8"/>
<rect x="3.4" y="15.6" width="20.6" height="2.6" rx="1.2" fill="#d9d9d9" stroke="#a9a9a9" stroke-width="0.6"/>
<circle cx="4.6" cy="16.6" r="0.5" fill="#666"/>
<rect x="1" y="20.4" width="25.4" height="1.1" fill="#fff" opacity="0.8"/>
<ellipse cx="13.8" cy="25.8" rx="12" ry="1.1" fill="#000" opacity="0.22"/></g>
<g transform="translate(173,73)" >
<path d="M6.6,0.6 H22.4 L28.6,6.8 V29.4 H6.6Z" fill="#f6f6f6" stroke="#dadada" stroke-width="0.7"/>
<path d="M22.4,0.6 V6.8 H28.6Z" fill="#e2e2e2" stroke="#d2d2d2" stroke-width="0.5"/>
<rect x="0.6" y="13.4" width="24.6" height="10.2" fill="url(#gPdf)"/>
<text x="13.2" y="22.4" font-family="Liberation Sans, sans-serif" font-weight="bold" font-size="10.4" fill="#fff" text-anchor="middle" textLength="17.6" lengthAdjust="spacingAndGlyphs">PDF</text></g>
<rect x="231.6" y="75.4" width="15.6" height="21.6" rx="1.2" fill="url(#gPage)" stroke="#858585" stroke-width="1.2"/>
<circle cx="234.6" cy="82.6" r="0.55" fill="#777"/><circle cx="234.6" cy="90.6" r="0.55" fill="#777"/>
<path d="M241.8,100.8 Q239.4,97.4 237.2,93.4 Q236.4,91.6 237.6,91 Q238.8,90.6 240,92.2 L241.6,94.4 L241.2,86 Q241.2,84.2 242.6,84.2 Q244,84.2 244.1,86 L244.6,90.4 L245,84.6 Q245.1,82.8 246.6,82.8 Q248.1,82.8 248.1,84.6 L248.2,90.4 L249.2,86 Q249.6,84.2 251,84.4 Q252.4,84.8 252.2,86.6 L251.6,91.4 L253.2,88.8 Q254.2,87.2 255.4,87.8 Q256.6,88.6 255.8,90.4 Q254.4,94 253.6,96.6 Q252.8,99 252,100.8 Z" fill="#fff" stroke="#5e5e5e" stroke-width="0.9" stroke-linejoin="round"/>
<rect x="278.6" y="74.8" width="22.8" height="26.2" rx="1.1" fill="url(#gPage)" stroke="#6f6f6f" stroke-width="1.1"/>
<rect x="283" y="79.6" width="14.6" height="16.8" rx="0.8" fill="none" stroke="#ff1818" stroke-width="1.3"/>
<rect x="324" y="74.2" width="24" height="27.6" fill="#f0a8a8"/>
<path d="M336,74.2 V101.8 M324,88 H348" stroke="#d88888" stroke-width="1.2"/>
<rect x="324.4" y="74.6" width="23.2" height="26.8" fill="none" stroke="#e09090" stroke-width="0.8"/>
<rect x="328.6" y="79.6" width="14.6" height="16.8" rx="0.8" fill="none" stroke="#1010ff" stroke-width="1.3"/>
<rect x="370.6" y="74.8" width="22.8" height="26.2" rx="1.1" fill="url(#gPage)" stroke="#6f6f6f" stroke-width="1.1"/>
<rect x="378" y="82" width="8.4" height="12" rx="1" fill="#e8e8ff" stroke="#5050ff" stroke-width="1.8"/>
<path d="M380.6,78.6 H383.8 L382.2,80.4Z M380.6,97.6 H383.8 L382.2,95.8Z M374,88 L376,86.2 V89.8Z M390.4,88 L388.4,86.2 V89.8Z" fill="#ff0000" stroke="#ff0000" stroke-width="0.5"/>
<rect x="428.6" y="75.2" width="18.6" height="25.4" rx="1.5" fill="url(#gPage)" stroke="#7c7c7c" stroke-width="1.2"/>
<circle cx="431.6" cy="83.4" r="0.6" fill="#555"/><circle cx="431.6" cy="92.2" r="0.6" fill="#555"/>
<rect x="473.6" y="79.8" width="23.8" height="17" rx="1.5" fill="url(#gPage)" stroke="#7c7c7c" stroke-width="1.2"/>
<circle cx="481.4" cy="82.6" r="0.55" fill="#555"/><circle cx="489.4" cy="82.6" r="0.55" fill="#555"/>
<rect x="530" y="75.4" width="21.4" height="25.4" rx="1.5" fill="url(#gPage)" stroke="#7c7c7c" stroke-width="1.2"/>
<clipPath id="clipOne"><rect x="530" y="70" width="25" height="24.1"/><rect x="540.75" y="94" width="1.9" height="1.8"/></clipPath>
<text x="541.4" y="95.6" font-family="Liberation Sans, sans-serif" font-size="20" fill="#505050" text-anchor="middle" clip-path="url(#clipOne)">1</text>
<g transform="translate(575.4,74.4)" ><rect x="0.5" y="0.5" width="22" height="26" rx="1" fill="url(#gPage)" stroke="#9a9a9a" stroke-width="1"/>
<path d="M7.8,0.5 V26.5 M15.2,0.5 V26.5 M0.5,9.2 H22.5 M0.5,17.8 H22.5" stroke="#9a9a9a" stroke-width="1"/></g>
<g transform="translate(619,74)" ><rect x="0.6" y="0.6" width="26.4" height="16.6" fill="url(#gPage)" stroke="#8d8d8d" stroke-width="0.9"/>
<path d="M13.4,0.6 V8" stroke="#8d8d8d" stroke-width="0.9"/></g>
<g transform="translate(632.6,89.5)" opacity="1.0"><line x1="6.30" y1="7.00" x2="10.22" y2="10.78" stroke="#000" stroke-opacity="0.18" stroke-width="5" stroke-linecap="round"/><line x1="6.86" y1="6.86" x2="9.94" y2="9.94" stroke="#555" stroke-width="4.6" stroke-linecap="round"/><line x1="7.00" y1="7.00" x2="9.80" y2="9.80" stroke="#a0a0a0" stroke-width="1.3" stroke-linecap="round"/><circle r="8.1" fill="#ecece4" stroke="#a9a99c" stroke-width="0.9"/><circle r="6.0" fill="url(#gLens)" stroke="#c9c9bd" stroke-width="0.8"/><path d="M-5.6,0.6 H5.6 M0,-5.6 V5.6" stroke="#3f78d0" stroke-width="0.8" opacity="0.7"/><path d="M-5.8,0.4 A5.9,5.9 0 0 1 5.8,0.4Z" fill="#cfe0f6" opacity="0.55"/></g>
<rect x="677.6" y="82" width="23.4" height="12.6" fill="url(#gRain)" stroke="#333" stroke-width="1"/>
<rect x="723.4" y="80.8" width="25.4" height="14.4" fill="url(#gGray)" stroke="#333" stroke-width="1"/>
<rect x="769" y="80.8" width="25.6" height="14.4" fill="#fff" stroke="#333" stroke-width="1"/><rect x="769" y="80.8" width="13.4" height="14.4" fill="#000"/>
<path d="M825.4,87.8 H850.8" stroke="#444" stroke-width="1.3"/><path d="M832.8,82.2 H843.4 L838.1,87.6Z M832.8,93.6 H843.4 L838.1,88.2Z" fill="#000"/>
<g transform="translate(883,77)" ><path d="M1,0.8 H20 L22.4,3 V23 H1Z" fill="url(#gPage)" stroke="#6a6a6a" stroke-width="1"/>
<path d="M22.4,3 V23 H8" stroke="#d0d0d0" stroke-width="1.6" fill="none" stroke-dasharray="3.4 2.4"/>
<path d="M1.6,22.6 L20,1.4 M3.4,23 L21.4,2.4" stroke="#3c3c3c" stroke-width="1" fill="none"/>
<circle cx="3.6" cy="8" r="0.5" fill="#666"/><circle cx="3.6" cy="15.6" r="0.5" fill="#666"/></g>
<path d="M927.4,88 H954.8 M941,74.4 V101.8" stroke="#9a9aff" stroke-width="1.4"/>
<path d="M933.4,88 H948.8 M941,80.2 V95.8" stroke="#000080" stroke-width="4.2"/>
<g transform="translate(985,73)" ><rect x="0.8" y="0.6" width="22.6" height="26.2" rx="1" fill="url(#gPage)" stroke="#9a9a9a" stroke-width="0.9"/>
<line x1="0.2" y1="27.6" x2="24.2" y2="27.6" stroke="#6e6e6e" stroke-width="1.1" opacity="0.75"/>
<line x1="7.2" y1="19.8" x2="15.6" y2="11" stroke="#2f6fb8" stroke-width="3" stroke-linecap="round"/>
<path d="M15,10.6 L18.6,7.4" stroke="#555" stroke-width="2.2"/>
<path d="M13.4,6.4 Q16.4,5.2 19.4,7.2 L21.4,10.2 L20,11.2 L18,8.8 Q15.6,7.4 13.4,8Z" fill="#333"/>
<line x1="9.4" y1="10.8" x2="19.6" y2="20" stroke="#9a9a9a" stroke-width="2.8" stroke-linecap="round"/>
<path d="M5.6,7.2 A3.4,3.4 0 1 0 10.6,7.4" fill="none" stroke="#8c8c8c" stroke-width="1.8"/></g>
<path d="M8.3,131.6 H14.7 M11.5,128.4 V134.8 M22.1,140.4 H28.5 M25.3,137.2 V143.6 M9.2,146.4 H15.6 M12.4,143.2 V149.6" stroke="#000" stroke-width="1.1"/>
<path d="M30.9,151.7 L30.9,147.29999999999998 L26.5,151.7Z" fill="#000"/>
<path d="M41.6,144.6 L65,134.2" fill="none" stroke="#222" stroke-width="1"/>
<path d="M66.0,151.7 L66.0,147.29999999999998 L61.6,151.7Z" fill="#000"/>
<path d="M8,183.4 Q9.6,166.4 27.6,163.8" fill="none" stroke="#222" stroke-width="1"/>
<path d="M30.9,186.6 L30.9,182.2 L26.5,186.6Z" fill="#000"/>
<circle cx="52.6" cy="173.6" r="10" fill="none" stroke="#222" stroke-width="1"/>
<path d="M66.0,186.6 L66.0,182.2 L61.6,186.6Z" fill="#000"/>
<ellipse cx="18.4" cy="209.6" rx="13" ry="5.6" transform="rotate(-45 18.4 209.6)" fill="none" stroke="#222" stroke-width="1"/>
<path d="M30.9,221.5 L30.9,217.1 L26.5,221.5Z" fill="#000"/>
<path d="M42,202.8 C43.4,212 46.4,218.6 50,218 C54.6,217 57.4,201 61.4,199.4 C64.6,198.6 64.6,212.6 61.6,212.8 C57.8,213 51.6,200.4 42,202.8Z" fill="none" stroke="#222" stroke-width="1"/>
<path d="M66.0,221.5 L66.0,217.1 L61.6,221.5Z" fill="#000"/>
<path d="M13.8,238.8 A4.4,4.6 0 0 0 13.8,248 L29,248" fill="none" stroke="#222" stroke-width="1"/>
<path d="M30.9,256.4 L30.9,251.99999999999997 L26.5,256.4Z" fill="#000"/>
<path d="M40,238.6 L43.6,232.6 H50.8 L54.4,238.6 L50.8,244.6 H43.6Z M55.8,245.4 L60.6,236.6 L65.4,245.4Z" fill="none" stroke="#222" stroke-width="1"/><rect x="41.2" y="249" width="14.4" height="6.8" fill="none" stroke="#222" stroke-width="1"/>
<path d="M66.0,256.4 L66.0,251.99999999999997 L61.6,256.4Z" fill="#000"/>
<g transform="translate(7,272)" ><path d="M6.6,0.6 H21.4 V13.6 H0.6 V6.6Z" fill="#fff" stroke="#222" stroke-width="1"/>
<path d="M1,9.4 L9.6,0.8 M1,12.4 L12.8,0.8 M2.4,13.6 L15.6,0.8 M5.4,13.6 L18.4,0.8 M8.4,13.6 L21.2,1 M11.4,13.6 L21.2,4 M14.4,13.6 L21.2,7 M17.4,13.6 L21.2,10" stroke="#333" stroke-width="0.7"/>
<circle cx="13.8" cy="8.4" r="2.9" fill="#fff" stroke="#222" stroke-width="1"/></g>
<path d="M30.9,291.3 L30.9,286.90000000000003 L26.5,291.3Z" fill="#000"/>
<text x="18" y="331.6" font-family="Liberation Serif, serif" font-size="28" fill="#111" text-anchor="middle">A</text>
<path d="M43.5,314.2 V329.9 M61.6,314.2 V329.9 M43.5,316.5 H61.6" fill="none" stroke="#222" stroke-width="1"/><path d="M43.5,316.5 L47,315 V318Z M61.6,316.5 L58.1,315 V318Z" fill="#111"/>
<path d="M66.0,334.8 L66.0,330.40000000000003 L61.6,334.8Z" fill="#000"/>
<g transform="translate(7.4,348.4)" ><rect x="0.6" y="0.6" width="21.4" height="17" rx="1" fill="#fff" stroke="#111" stroke-width="1.3"/>
<path d="M2.6,14.8 L8.4,8.2 L11.4,11 L14.2,8.8 L19.6,13.4 V14.8Z" fill="#111"/><circle cx="17.2" cy="5" r="1.5" fill="#111"/></g>
<g transform="translate(3.2,385)" ><path d="M2,27.8 L2,8.8 L21.8,27.8Z" fill="#fff" stroke="#222" stroke-width="1.2"/>
<path d="M5.8,24.6 L5.8,18.8 L11.8,24.6Z" fill="#fff" stroke="#222" stroke-width="1"/>
<g transform="translate(11.6,8) rotate(-42) scale(0.82)"><path d="M-2.4,-8 H2.4 V4 L0,8 L-2.4,4Z" fill="#e02a18" stroke="#7a2a10" stroke-width="0.6"/><path d="M-2.4,4 L0,8 L2.4,4Z" fill="#e8c898" stroke="#7a2a10" stroke-width="0.5"/><rect x="-2.4" y="-9.4" width="4.8" height="2" fill="#e02a18" stroke="#7a2a10" stroke-width="0.5"/></g>
<path d="M22.6,5 L20.4,20 M22.6,5 L25.8,20 M22.6,2.4 V5" stroke="#222" stroke-width="1.1" fill="none"/><circle cx="22.6" cy="5.4" r="1.2" fill="#222"/></g>
<path d="M30.9,412.7 L30.9,408.3 L26.5,412.7Z" fill="#000"/>
<g transform="translate(41,394.6)" ><rect x="0.5" y="0.5" width="23.6" height="8.4" rx="0.8" fill="#fff" stroke="#222" stroke-width="1"/>
<path d="M3,0.8 V4.4 M5.2,0.8 V3 M7.4,0.8 V3 M9.6,0.8 V3 M11.8,0.8 V4.4 M14,0.8 V3 M16.2,0.8 V3 M18.4,0.8 V3 M20.6,0.8 V4.4" stroke="#222" stroke-width="0.7"/></g>
<g transform="translate(5,424)" ><g opacity="0.72"><rect x="3.6" y="1.8" width="16.6" height="11.6" fill="#f4f0d2" stroke="#8a8a8a" stroke-width="1"/>
<circle cx="17.4" cy="13.6" r="6.6" fill="#f4f0d2" fill-opacity="0.7" stroke="#8a8a8a" stroke-width="1"/>
<path d="M3.6,13.4 H10.8" stroke="#e05050" stroke-width="1"/><circle cx="3.4" cy="13.4" r="1.2" fill="#e05050"/></g></g>
<path d="M42,433.8 L59,423.6" stroke="#f01818" stroke-width="1.1"/>
<path transform="translate(51.6,429.2) scale(0.78)" d="M0,0 L0,16.5 L3.9,12.9 L6.6,19.3 L9.2,18.2 L6.5,12 L11.7,12 Z" fill="#fff" stroke="#7a7a7a" stroke-width="1.1538461538461537" stroke-linejoin="round"/>
<path d="M66.0,447.7 L66.0,443.3 L61.6,447.7Z" fill="#000"/>
<g transform="translate(6.6,466.4)" ><path d="M1.2,7.6 L13.6,1 L22.6,5.6 L22.6,17.2 L10.2,23.8 L1.2,19.2Z M1.2,7.6 L10.2,12.2 L22.6,5.6 M10.2,12.2 V23.8" fill="none" stroke="#222" stroke-width="1.1" stroke-linejoin="round"/></g>
<path d="M30.9,490.8 L30.9,486.40000000000003 L26.5,490.8Z" fill="#000"/>
<path d="M79,116 L87,124 M87,116 L79,124" stroke="#4e4e4e" stroke-width="1.05"/>
<g transform="translate(102.2,118.9)" ><circle r="5.8" fill="#f2f2f4" stroke="#2a3f90" stroke-width="1.8"/><path d="M-4,0 H4 M0,-4 V4" stroke="#c05050" stroke-width="0.7"/><circle r="2.6" fill="none" stroke="#888" stroke-width="0.6"/>
<path d="M0.4,0.4 L5.6,5.8" stroke="#f0a020" stroke-width="2.2" stroke-linecap="round"/><circle cx="6" cy="6.2" r="0.9" fill="#d04040"/></g>
<g clip-path="url(#clipH)" font-family="Liberation Sans, sans-serif" font-size="9.3" letter-spacing="-0.2" fill="#1e1e1e" text-anchor="middle"><line x1="97.62" y1="148" x2="97.62" y2="155" stroke="#555" stroke-width="1"/><text x="97.62" y="141">-80</text><line x1="120.36" y1="148" x2="120.36" y2="155" stroke="#555" stroke-width="1"/><text x="120.36" y="141">-70</text><line x1="143.09" y1="148" x2="143.09" y2="155" stroke="#555" stroke-width="1"/><text x="143.09" y="141">-60</text><line x1="165.82" y1="148" x2="165.82" y2="155" stroke="#555" stroke-width="1"/><text x="165.82" y="141">-50</text><line x1="188.56" y1="148" x2="188.56" y2="155" stroke="#555" stroke-width="1"/><text x="188.56" y="141">-40</text><line x1="211.30" y1="148" x2="211.30" y2="155" stroke="#555" stroke-width="1"/><text x="211.30" y="141">-30</text><line x1="234.03" y1="148" x2="234.03" y2="155" stroke="#555" stroke-width="1"/><text x="234.03" y="141">-20</text><line x1="256.76" y1="148" x2="256.76" y2="155" stroke="#555" stroke-width="1"/><text x="256.76" y="141">-10</text><line x1="279.50" y1="148" x2="279.50" y2="155" stroke="#555" stroke-width="1"/><text x="279.50" y="141">0</text><line x1="302.24" y1="148" x2="302.24" y2="155" stroke="#555" stroke-width="1"/><text x="302.24" y="141">10</text><line x1="324.97" y1="148" x2="324.97" y2="155" stroke="#555" stroke-width="1"/><text x="324.97" y="141">20</text><line x1="347.70" y1="148" x2="347.70" y2="155" stroke="#555" stroke-width="1"/><text x="347.70" y="141">30</text><line x1="370.44" y1="148" x2="370.44" y2="155" stroke="#555" stroke-width="1"/><text x="370.44" y="141">40</text><line x1="393.18" y1="148" x2="393.18" y2="155" stroke="#555" stroke-width="1"/><text x="393.18" y="141">50</text><line x1="415.91" y1="148" x2="415.91" y2="155" stroke="#555" stroke-width="1"/><text x="415.91" y="141">60</text><line x1="438.64" y1="148" x2="438.64" y2="155" stroke="#555" stroke-width="1"/><text x="438.64" y="141">70</text><line x1="461.38" y1="148" x2="461.38" y2="155" stroke="#555" stroke-width="1"/><text x="461.38" y="141">80</text><line x1="484.12" y1="148" x2="484.12" y2="155" stroke="#555" stroke-width="1"/><text x="484.12" y="141">90</text><line x1="506.85" y1="148" x2="506.85" y2="155" stroke="#555" stroke-width="1"/><text x="506.85" y="141">100</text><line x1="529.59" y1="148" x2="529.59" y2="155" stroke="#555" stroke-width="1"/><text x="529.59" y="141">110</text><line x1="552.32" y1="148" x2="552.32" y2="155" stroke="#555" stroke-width="1"/><text x="552.32" y="141">120</text><line x1="575.06" y1="148" x2="575.06" y2="155" stroke="#555" stroke-width="1"/><text x="575.06" y="141">130</text><line x1="597.79" y1="148" x2="597.79" y2="155" stroke="#555" stroke-width="1"/><text x="597.79" y="141">140</text><line x1="620.52" y1="148" x2="620.52" y2="155" stroke="#555" stroke-width="1"/><text x="620.52" y="141">150</text><line x1="643.26" y1="148" x2="643.26" y2="155" stroke="#555" stroke-width="1"/><text x="643.26" y="141">160</text><line x1="665.99" y1="148" x2="665.99" y2="155" stroke="#555" stroke-width="1"/><text x="665.99" y="141">170</text><line x1="688.73" y1="148" x2="688.73" y2="155" stroke="#555" stroke-width="1"/><text x="688.73" y="141">180</text><line x1="711.46" y1="148" x2="711.46" y2="155" stroke="#555" stroke-width="1"/><text x="711.46" y="141">190</text><line x1="734.20" y1="148" x2="734.20" y2="155" stroke="#555" stroke-width="1"/><text x="734.20" y="141">200</text><line x1="756.93" y1="148" x2="756.93" y2="155" stroke="#555" stroke-width="1"/><text x="756.93" y="141">210</text><line x1="779.67" y1="148" x2="779.67" y2="155" stroke="#555" stroke-width="1"/><text x="779.67" y="141">220</text><line x1="802.40" y1="148" x2="802.40" y2="155" stroke="#555" stroke-width="1"/><text x="802.40" y="141">230</text><line x1="825.14" y1="148" x2="825.14" y2="155" stroke="#555" stroke-width="1"/><text x="825.14" y="141">240</text><line x1="847.88" y1="148" x2="847.88" y2="155" stroke="#555" stroke-width="1"/><text x="847.88" y="141">250</text><line x1="870.61" y1="148" x2="870.61" y2="155" stroke="#555" stroke-width="1"/><text x="870.61" y="141">260</text><line x1="893.34" y1="148" x2="893.34" y2="155" stroke="#555" stroke-width="1"/><text x="893.34" y="141">270</text><line x1="916.08" y1="148" x2="916.08" y2="155" stroke="#555" stroke-width="1"/><text x="916.08" y="141">280</text><line x1="938.81" y1="148" x2="938.81" y2="155" stroke="#555" stroke-width="1"/><text x="938.81" y="141">290</text><line x1="961.55" y1="148" x2="961.55" y2="155" stroke="#555" stroke-width="1"/><text x="961.55" y="141">300</text><line x1="984.28" y1="148" x2="984.28" y2="155" stroke="#555" stroke-width="1"/><text x="984.28" y="141">310</text><line x1="1007.02" y1="148" x2="1007.02" y2="155" stroke="#555" stroke-width="1"/><text x="1007.02" y="141">320</text><line x1="1029.76" y1="148" x2="1029.76" y2="155" stroke="#555" stroke-width="1"/><text x="1029.76" y="141">330</text><line x1="1052.49" y1="148" x2="1052.49" y2="155" stroke="#555" stroke-width="1"/><text x="1052.49" y="141">340</text><line x1="1075.22" y1="148" x2="1075.22" y2="155" stroke="#555" stroke-width="1"/><text x="1075.22" y="141">350</text><line x1="1097.96" y1="148" x2="1097.96" y2="155" stroke="#555" stroke-width="1"/><text x="1097.96" y="141">360</text><line x1="1120.69" y1="148" x2="1120.69" y2="155" stroke="#555" stroke-width="1"/><text x="1120.69" y="141">370</text><line x1="1143.43" y1="148" x2="1143.43" y2="155" stroke="#555" stroke-width="1"/><text x="1143.43" y="141">380</text></g><g clip-path="url(#clipV)" font-family="Liberation Sans, sans-serif" font-size="9.3" letter-spacing="-0.2" fill="#1e1e1e" text-anchor="middle"><line x1="88" y1="750.61" x2="95" y2="750.61" stroke="#555" stroke-width="1"/><text transform="translate(81.4,750.61) rotate(-90)">-30</text><line x1="88" y1="727.87" x2="95" y2="727.87" stroke="#555" stroke-width="1"/><text transform="translate(81.4,725.67) rotate(-90)">-20</text><line x1="88" y1="705.13" x2="95" y2="705.13" stroke="#555" stroke-width="1"/><text transform="translate(81.4,705.13) rotate(-90)">-10</text><line x1="88" y1="682.40" x2="95" y2="682.40" stroke="#555" stroke-width="1"/><text transform="translate(81.4,682.40) rotate(-90)">0</text><line x1="88" y1="659.66" x2="95" y2="659.66" stroke="#555" stroke-width="1"/><text transform="translate(81.4,659.66) rotate(-90)">10</text><line x1="88" y1="636.93" x2="95" y2="636.93" stroke="#555" stroke-width="1"/><text transform="translate(81.4,636.93) rotate(-90)">20</text><line x1="88" y1="614.19" x2="95" y2="614.19" stroke="#555" stroke-width="1"/><text transform="translate(81.4,614.19) rotate(-90)">30</text><line x1="88" y1="591.46" x2="95" y2="591.46" stroke="#555" stroke-width="1"/><text transform="translate(81.4,591.46) rotate(-90)">40</text><line x1="88" y1="568.73" x2="95" y2="568.73" stroke="#555" stroke-width="1"/><text transform="translate(81.4,568.73) rotate(-90)">50</text><line x1="88" y1="545.99" x2="95" y2="545.99" stroke="#555" stroke-width="1"/><text transform="translate(81.4,545.99) rotate(-90)">60</text><line x1="88" y1="523.25" x2="95" y2="523.25" stroke="#555" stroke-width="1"/><text transform="translate(81.4,523.25) rotate(-90)">70</text><line x1="88" y1="500.52" x2="95" y2="500.52" stroke="#555" stroke-width="1"/><text transform="translate(81.4,500.52) rotate(-90)">80</text><line x1="88" y1="477.78" x2="95" y2="477.78" stroke="#555" stroke-width="1"/><text transform="translate(81.4,477.78) rotate(-90)">90</text><line x1="88" y1="455.05" x2="95" y2="455.05" stroke="#555" stroke-width="1"/><text transform="translate(81.4,455.05) rotate(-90)">100</text><line x1="88" y1="432.31" x2="95" y2="432.31" stroke="#555" stroke-width="1"/><text transform="translate(81.4,432.31) rotate(-90)">110</text><line x1="88" y1="409.58" x2="95" y2="409.58" stroke="#555" stroke-width="1"/><text transform="translate(81.4,409.58) rotate(-90)">120</text><line x1="88" y1="386.84" x2="95" y2="386.84" stroke="#555" stroke-width="1"/><text transform="translate(81.4,386.84) rotate(-90)">130</text><line x1="88" y1="364.11" x2="95" y2="364.11" stroke="#555" stroke-width="1"/><text transform="translate(81.4,364.11) rotate(-90)">140</text><line x1="88" y1="341.38" x2="95" y2="341.38" stroke="#555" stroke-width="1"/><text transform="translate(81.4,341.38) rotate(-90)">150</text><line x1="88" y1="318.64" x2="95" y2="318.64" stroke="#555" stroke-width="1"/><text transform="translate(81.4,318.64) rotate(-90)">160</text><line x1="88" y1="295.91" x2="95" y2="295.91" stroke="#555" stroke-width="1"/><text transform="translate(81.4,295.91) rotate(-90)">170</text><line x1="88" y1="273.17" x2="95" y2="273.17" stroke="#555" stroke-width="1"/><text transform="translate(81.4,273.17) rotate(-90)">180</text><line x1="88" y1="250.44" x2="95" y2="250.44" stroke="#555" stroke-width="1"/><text transform="translate(81.4,250.44) rotate(-90)">190</text><line x1="88" y1="227.70" x2="95" y2="227.70" stroke="#555" stroke-width="1"/><text transform="translate(81.4,227.70) rotate(-90)">200</text><line x1="88" y1="204.97" x2="95" y2="204.97" stroke="#555" stroke-width="1"/><text transform="translate(81.4,204.97) rotate(-90)">210</text><line x1="88" y1="182.23" x2="95" y2="182.23" stroke="#555" stroke-width="1"/><text transform="translate(81.4,182.23) rotate(-90)">220</text><line x1="88" y1="159.50" x2="95" y2="159.50" stroke="#555" stroke-width="1"/><text transform="translate(81.4,159.50) rotate(-90)">230</text></g>
<g stroke="#e03838" stroke-width="1" fill="none" opacity="0.8"><path d="M259.4,682 H300 M279.5,662 V702"/><circle cx="279.5" cy="682" r="5.5"/></g>
<rect x="1133.2" y="780.6" width="13" height="8.8" fill="#fff" stroke="#333" stroke-width="1"/><rect x="1133.2" y="780.6" width="13" height="2.2" fill="#222"/>
<g transform="translate(1164,117.9)" ><circle r="7" fill="#5e5e5e"/><path d="M-2.8,-2.8 L2.8,2.8 M2.8,-2.8 L-2.8,2.8" stroke="#ececec" stroke-width="2.2" stroke-linecap="round"/></g>
<g transform="translate(1182,117.9)" ><circle r="7" fill="#5e5e5e"/><rect x="-1.6" y="-3.6" width="5.2" height="4.4" rx="0.8" fill="none" stroke="#ececec" stroke-width="1.2"/><rect x="-3.8" y="-1.2" width="5.2" height="4.4" rx="0.8" fill="#5c5c5c" stroke="#ececec" stroke-width="1.2"/></g>
<g transform="translate(1164,332.2)" ><circle r="7" fill="#5e5e5e"/><path d="M-2.8,-2.8 L2.8,2.8 M2.8,-2.8 L-2.8,2.8" stroke="#ececec" stroke-width="2.2" stroke-linecap="round"/></g>
<g transform="translate(1182,332.2)" ><circle r="7" fill="#5e5e5e"/><rect x="-1.6" y="-3.6" width="5.2" height="4.4" rx="0.8" fill="none" stroke="#ececec" stroke-width="1.2"/><rect x="-3.8" y="-1.2" width="5.2" height="4.4" rx="0.8" fill="#5c5c5c" stroke="#ececec" stroke-width="1.2"/></g>
<g transform="translate(1173.8,142.45000000000002) scale(1.0,0.93)" opacity="1.0"><path fill-rule="evenodd" d="M-7.7,0.5 Q-6.4,-2.6 -3.6,-4.4 Q-0.4,-6.2 3.2,-5 Q6,-3.6 7.7,0.6 Q5.4,3.6 3,5 Q0,6.4 -3,5.2 Q-5.8,3.8 -7.7,0.5Z M-5.4,-1.3 Q-4.8,3.9 -0.1,3.9 Q4.5,3.9 5,-1.5 L3.1,-2 Q3.1,1.9 -0.2,1.9 Q-3.4,1.9 -3.5,-1.9 Z M-1.85,-0.8 A0.85,0.85 0 1 0 -0.15,-0.8 A0.85,0.85 0 1 0 -1.85,-0.8Z" fill="#000"/></g>
<g transform="translate(1211.2,142.45000000000002) scale(1.0,0.93)" opacity="0.8"><path fill-rule="evenodd" d="M-7.7,0.5 Q-6.4,-2.6 -3.6,-4.4 Q-0.4,-6.2 3.2,-5 Q6,-3.6 7.7,0.6 Q5.4,3.6 3,5 Q0,6.4 -3,5.2 Q-5.8,3.8 -7.7,0.5Z M-5.4,-1.3 Q-4.8,3.9 -0.1,3.9 Q4.5,3.9 5,-1.5 L3.1,-2 Q3.1,1.9 -0.2,1.9 Q-3.4,1.9 -3.5,-1.9 Z M-1.85,-0.8 A0.85,0.85 0 1 0 -0.15,-0.8 A0.85,0.85 0 1 0 -1.85,-0.8Z" fill="#9a9a9a"/></g>
<path d="M1243.0,142.8 H1254.1999999999998 M1248.6,137.20000000000002 V148.4" stroke="#e80000" stroke-width="2.7"/>
<path d="M1280.4,142.8 H1291.6" stroke="#e80000" stroke-width="2.7"/>
<text x="1319.1" y="147.0" font-family="Liberation Sans, sans-serif" font-size="11.5" fill="#222" text-anchor="middle">a</text><text x="1328.1" y="147.0" font-family="Liberation Sans, sans-serif" font-size="11.5" fill="#222" text-anchor="middle">b</text><path d="M1323.6,136.20000000000002 V147.8" stroke="#222" stroke-width="0.8"/>
<g transform="translate(1360.8,142.4) scale(0.94)" opacity="1.0"><g transform="rotate(47) scale(0.84,0.94)"><path d="M-1.9,-9.6 L1.9,-9.6 L1.9,6.0 L0,10.6 L-1.9,6.0Z" fill="#eeb245" stroke="#a07828" stroke-width="0.7"/><rect x="-1.9" y="-10.4" width="3.8" height="3.3" fill="#e03030" stroke="#b02020" stroke-width="0.5"/><path d="M-1.9,6.0 L0,10.6 L1.9,6.0Z" fill="#e8d0a0" stroke="#a87820" stroke-width="0.5"/><path d="M-0.7,8.9 L0,10.6 L0.7,8.9Z" fill="#333"/></g></g>
<g transform="translate(1398.1999999999998,142.8)" ><rect x="-5.6" y="-6.6" width="11" height="13.4" fill="#e8e8ee" stroke="#d0d0da" stroke-width="0.6"/><path d="M-3.4,-3.6 Q1.6,-4.6 1.6,-0.6 V1.6 H-1 L2.6,6 L6,1.6 H3.8 V-1 Q3.6,-6.6 -3.4,-6Z" fill="#7a9af0" stroke="#5a7ae0" stroke-width="0.5" opacity="0.9"/></g>
<g transform="translate(1435.6,142.8)" ><rect x="-5" y="-5" width="10" height="10" rx="1" fill="#e07e52" stroke="#dc4a38" stroke-width="0.9"/><path d="M-2.4,-2.4 L2.4,2.4 M2.4,-2.4 L-2.4,2.4" stroke="#fff" stroke-width="1.5"/></g>
<g transform="translate(1169,166.65) scale(1.0,0.93)" opacity="1.0"><path fill-rule="evenodd" d="M-7.7,0.5 Q-6.4,-2.6 -3.6,-4.4 Q-0.4,-6.2 3.2,-5 Q6,-3.6 7.7,0.6 Q5.4,3.6 3,5 Q0,6.4 -3,5.2 Q-5.8,3.8 -7.7,0.5Z M-5.4,-1.3 Q-4.8,3.9 -0.1,3.9 Q4.5,3.9 5,-1.5 L3.1,-2 Q3.1,1.9 -0.2,1.9 Q-3.4,1.9 -3.5,-1.9 Z M-1.85,-0.8 A0.85,0.85 0 1 0 -0.15,-0.8 A0.85,0.85 0 1 0 -1.85,-0.8Z" fill="#000"/></g>
<g transform="translate(1169,186.65) scale(1.0,0.93)" opacity="1.0"><path fill-rule="evenodd" d="M-7.7,0.5 Q-6.4,-2.6 -3.6,-4.4 Q-0.4,-6.2 3.2,-5 Q6,-3.6 7.7,0.6 Q5.4,3.6 3,5 Q0,6.4 -3,5.2 Q-5.8,3.8 -7.7,0.5Z M-5.4,-1.3 Q-4.8,3.9 -0.1,3.9 Q4.5,3.9 5,-1.5 L3.1,-2 Q3.1,1.9 -0.2,1.9 Q-3.4,1.9 -3.5,-1.9 Z M-1.85,-0.8 A0.85,0.85 0 1 0 -0.15,-0.8 A0.85,0.85 0 1 0 -1.85,-0.8Z" fill="#36445a"/></g>
<g transform="translate(1169,206.65) scale(1.0,0.93)" opacity="1.0"><path fill-rule="evenodd" d="M-7.7,0.5 Q-6.4,-2.6 -3.6,-4.4 Q-0.4,-6.2 3.2,-5 Q6,-3.6 7.7,0.6 Q5.4,3.6 3,5 Q0,6.4 -3,5.2 Q-5.8,3.8 -7.7,0.5Z M-5.4,-1.3 Q-4.8,3.9 -0.1,3.9 Q4.5,3.9 5,-1.5 L3.1,-2 Q3.1,1.9 -0.2,1.9 Q-3.4,1.9 -3.5,-1.9 Z M-1.85,-0.8 A0.85,0.85 0 1 0 -0.15,-0.8 A0.85,0.85 0 1 0 -1.85,-0.8Z" fill="#000"/></g>
<g transform="translate(1191.2,187) scale(0.87)" opacity="0.78"><g transform="rotate(47) scale(0.84,0.94)"><path d="M-1.9,-9.6 L1.9,-9.6 L1.9,6.0 L0,10.6 L-1.9,6.0Z" fill="#eeb245" stroke="#a07828" stroke-width="0.7"/><rect x="-1.9" y="-10.4" width="3.8" height="3.3" fill="#e03030" stroke="#b02020" stroke-width="0.5"/><path d="M-1.9,6.0 L0,10.6 L1.9,6.0Z" fill="#e8d0a0" stroke="#a87820" stroke-width="0.5"/><path d="M-0.7,8.9 L0,10.6 L0.7,8.9Z" fill="#333"/></g></g>
<g transform="translate(1185.4,356.25) scale(1.0,0.93)" opacity="1.0"><path fill-rule="evenodd" d="M-7.7,0.5 Q-6.4,-2.6 -3.6,-4.4 Q-0.4,-6.2 3.2,-5 Q6,-3.6 7.7,0.6 Q5.4,3.6 3,5 Q0,6.4 -3,5.2 Q-5.8,3.8 -7.7,0.5Z M-5.4,-1.3 Q-4.8,3.9 -0.1,3.9 Q4.5,3.9 5,-1.5 L3.1,-2 Q3.1,1.9 -0.2,1.9 Q-3.4,1.9 -3.5,-1.9 Z M-1.85,-0.8 A0.85,0.85 0 1 0 -0.15,-0.8 A0.85,0.85 0 1 0 -1.85,-0.8Z" fill="#000"/></g>
<g transform="translate(1245.2,356.25) scale(1.0,0.93)" opacity="0.8"><path fill-rule="evenodd" d="M-7.7,0.5 Q-6.4,-2.6 -3.6,-4.4 Q-0.4,-6.2 3.2,-5 Q6,-3.6 7.7,0.6 Q5.4,3.6 3,5 Q0,6.4 -3,5.2 Q-5.8,3.8 -7.7,0.5Z M-5.4,-1.3 Q-4.8,3.9 -0.1,3.9 Q4.5,3.9 5,-1.5 L3.1,-2 Q3.1,1.9 -0.2,1.9 Q-3.4,1.9 -3.5,-1.9 Z M-1.85,-0.8 A0.85,0.85 0 1 0 -0.15,-0.8 A0.85,0.85 0 1 0 -1.85,-0.8Z" fill="#9a9a9a"/></g>
<path d="M1299.4,356.6 H1310.6 M1305.0,351.0 V362.20000000000005" stroke="#e80000" stroke-width="2.7"/>
<path d="M1359.2000000000003,356.6 H1370.4" stroke="#e80000" stroke-width="2.7"/>
<g transform="translate(1424.6000000000001,356.0) scale(0.94)" opacity="1.0"><g transform="rotate(47) scale(0.84,0.94)"><path d="M-1.9,-9.6 L1.9,-9.6 L1.9,6.0 L0,10.6 L-1.9,6.0Z" fill="#eeb245" stroke="#a07828" stroke-width="0.7"/><rect x="-1.9" y="-10.4" width="3.8" height="3.3" fill="#e03030" stroke="#b02020" stroke-width="0.5"/><path d="M-1.9,6.0 L0,10.6 L1.9,6.0Z" fill="#e8d0a0" stroke="#a87820" stroke-width="0.5"/><path d="M-0.7,8.9 L0,10.6 L0.7,8.9Z" fill="#333"/></g></g>
<g transform="translate(1423,380.65) scale(1.0,0.93)" opacity="1.0"><path fill-rule="evenodd" d="M-7.7,0.5 Q-6.4,-2.6 -3.6,-4.4 Q-0.4,-6.2 3.2,-5 Q6,-3.6 7.7,0.6 Q5.4,3.6 3,5 Q0,6.4 -3,5.2 Q-5.8,3.8 -7.7,0.5Z M-5.4,-1.3 Q-4.8,3.9 -0.1,3.9 Q4.5,3.9 5,-1.5 L3.1,-2 Q3.1,1.9 -0.2,1.9 Q-3.4,1.9 -3.5,-1.9 Z M-1.85,-0.8 A0.85,0.85 0 1 0 -0.15,-0.8 A0.85,0.85 0 1 0 -1.85,-0.8Z" fill="#000"/></g>
<g transform="translate(1445,381)"><path d="M-3.3,-0.5 V-3 A3.3,3.3 0 0 1 3.3,-3 V-0.5" fill="none" stroke="#b9b9b9" stroke-width="1.5"/><rect x="-5" y="-0.8" width="10" height="7.8" fill="#b9b9b9"/></g>
<g transform="translate(1423,400.65) scale(1.0,0.93)" opacity="1.0"><path fill-rule="evenodd" d="M-7.7,0.5 Q-6.4,-2.6 -3.6,-4.4 Q-0.4,-6.2 3.2,-5 Q6,-3.6 7.7,0.6 Q5.4,3.6 3,5 Q0,6.4 -3,5.2 Q-5.8,3.8 -7.7,0.5Z M-5.4,-1.3 Q-4.8,3.9 -0.1,3.9 Q4.5,3.9 5,-1.5 L3.1,-2 Q3.1,1.9 -0.2,1.9 Q-3.4,1.9 -3.5,-1.9 Z M-1.85,-0.8 A0.85,0.85 0 1 0 -0.15,-0.8 A0.85,0.85 0 1 0 -1.85,-0.8Z" fill="#000"/></g>
<g transform="translate(1445,401)"><path d="M-3.3,-0.5 V-3 A3.3,3.3 0 0 1 3.3,-3 V-0.5" fill="none" stroke="#b9b9b9" stroke-width="1.5"/><rect x="-5" y="-0.8" width="10" height="7.8" fill="#b9b9b9"/></g>
<g transform="translate(1423,420.65) scale(1.0,0.93)" opacity="1.0"><path fill-rule="evenodd" d="M-7.7,0.5 Q-6.4,-2.6 -3.6,-4.4 Q-0.4,-6.2 3.2,-5 Q6,-3.6 7.7,0.6 Q5.4,3.6 3,5 Q0,6.4 -3,5.2 Q-5.8,3.8 -7.7,0.5Z M-5.4,-1.3 Q-4.8,3.9 -0.1,3.9 Q4.5,3.9 5,-1.5 L3.1,-2 Q3.1,1.9 -0.2,1.9 Q-3.4,1.9 -3.5,-1.9 Z M-1.85,-0.8 A0.85,0.85 0 1 0 -0.15,-0.8 A0.85,0.85 0 1 0 -1.85,-0.8Z" fill="#000"/></g>
<g transform="translate(1445,421)"><path d="M-3.3,-0.5 V-3 A3.3,3.3 0 0 1 3.3,-3 V-0.5" fill="none" stroke="#b9b9b9" stroke-width="1.5"/><rect x="-5" y="-0.8" width="10" height="7.8" fill="#b9b9b9"/></g>
<g transform="translate(1423,440.65) scale(1.0,0.93)" opacity="1.0"><path fill-rule="evenodd" d="M-7.7,0.5 Q-6.4,-2.6 -3.6,-4.4 Q-0.4,-6.2 3.2,-5 Q6,-3.6 7.7,0.6 Q5.4,3.6 3,5 Q0,6.4 -3,5.2 Q-5.8,3.8 -7.7,0.5Z M-5.4,-1.3 Q-4.8,3.9 -0.1,3.9 Q4.5,3.9 5,-1.5 L3.1,-2 Q3.1,1.9 -0.2,1.9 Q-3.4,1.9 -3.5,-1.9 Z M-1.85,-0.8 A0.85,0.85 0 1 0 -0.15,-0.8 A0.85,0.85 0 1 0 -1.85,-0.8Z" fill="#000"/></g>
<g transform="translate(1445,441)"><path d="M-3.3,-0.5 V-3 A3.3,3.3 0 0 1 3.3,-3 V-0.5" fill="none" stroke="#b9b9b9" stroke-width="1.5"/><rect x="-5" y="-0.8" width="10" height="7.8" fill="#b9b9b9"/></g>
<g transform="translate(1423,460.65) scale(1.0,0.93)" opacity="1.0"><path fill-rule="evenodd" d="M-7.7,0.5 Q-6.4,-2.6 -3.6,-4.4 Q-0.4,-6.2 3.2,-5 Q6,-3.6 7.7,0.6 Q5.4,3.6 3,5 Q0,6.4 -3,5.2 Q-5.8,3.8 -7.7,0.5Z M-5.4,-1.3 Q-4.8,3.9 -0.1,3.9 Q4.5,3.9 5,-1.5 L3.1,-2 Q3.1,1.9 -0.2,1.9 Q-3.4,1.9 -3.5,-1.9 Z M-1.85,-0.8 A0.85,0.85 0 1 0 -0.15,-0.8 A0.85,0.85 0 1 0 -1.85,-0.8Z" fill="#000"/></g>
<g transform="translate(1445,461)"><path d="M-3.3,-0.5 V-3 A3.3,3.3 0 0 1 3.3,-3 V-0.5" fill="none" stroke="#b9b9b9" stroke-width="1.5"/><rect x="-5" y="-0.8" width="10" height="7.8" fill="#b9b9b9"/></g>
<g transform="translate(1423,480.65) scale(1.0,0.93)" opacity="1.0"><path fill-rule="evenodd" d="M-7.7,0.5 Q-6.4,-2.6 -3.6,-4.4 Q-0.4,-6.2 3.2,-5 Q6,-3.6 7.7,0.6 Q5.4,3.6 3,5 Q0,6.4 -3,5.2 Q-5.8,3.8 -7.7,0.5Z M-5.4,-1.3 Q-4.8,3.9 -0.1,3.9 Q4.5,3.9 5,-1.5 L3.1,-2 Q3.1,1.9 -0.2,1.9 Q-3.4,1.9 -3.5,-1.9 Z M-1.85,-0.8 A0.85,0.85 0 1 0 -0.15,-0.8 A0.85,0.85 0 1 0 -1.85,-0.8Z" fill="#000"/></g>
<g transform="translate(1445,481)"><path d="M-3.3,-0.5 V-3 A3.3,3.3 0 0 1 3.3,-3 V-0.5" fill="none" stroke="#b9b9b9" stroke-width="1.5"/><rect x="-5" y="-0.8" width="10" height="7.8" fill="#b9b9b9"/></g>
<g transform="translate(1401.2,481) scale(0.87)" opacity="1.0"><g transform="rotate(47) scale(0.84,0.94)"><path d="M-1.9,-9.6 L1.9,-9.6 L1.9,6.0 L0,10.6 L-1.9,6.0Z" fill="#eeb245" stroke="#a07828" stroke-width="0.7"/><rect x="-1.9" y="-10.4" width="3.8" height="3.3" fill="#e03030" stroke="#b02020" stroke-width="0.5"/><path d="M-1.9,6.0 L0,10.6 L1.9,6.0Z" fill="#e8d0a0" stroke="#a87820" stroke-width="0.5"/><path d="M-0.7,8.9 L0,10.6 L0.7,8.9Z" fill="#333"/></g></g>
<g transform="translate(1463,127.0)" ><rect x="0.5" y="0.5" width="27" height="26.4" fill="#fff" stroke="#111" stroke-width="1"/><rect x="0.5" y="0.5" width="27" height="4" fill="#000"/><rect x="1.2" y="1.1" width="3" height="2.8" fill="#fff"/><path d="M7.6,11.6 L11.6,9 V21 L7.6,22.6Z" fill="#888" stroke="#444" stroke-width="0.7"/><path d="M10,10.6 L14,8.4 V20.6 L10,22Z" fill="#aaa" stroke="#444" stroke-width="0.7"/><path d="M12.6,10 L20.6,7.4 V19.4 L12.6,21.6Z" fill="#e8e8e8" stroke="#444" stroke-width="0.7"/><path d="M14.6,18.6 L18.6,10.8 V18.6Z" fill="none" stroke="#e03030" stroke-width="0.7"/></g>
<g transform="translate(1463,174.0)" ><rect x="0.5" y="0.5" width="27" height="26.4" fill="#fff" stroke="#111" stroke-width="1"/><rect x="0.5" y="0.5" width="27" height="4" fill="#000"/><rect x="1.2" y="1.1" width="3" height="2.8" fill="#fff"/><rect x="7.4" y="10.6" width="9.6" height="7.4" fill="#f8ecb8" stroke="#666" stroke-width="0.8"/><circle cx="16.2" cy="17.6" r="4" fill="#f8ecb8" fill-opacity="0.8" stroke="#666" stroke-width="0.8"/></g>
<g transform="translate(1463,221.20000000000002)" ><rect x="0.5" y="0.5" width="27" height="26.4" fill="#fff" stroke="#111" stroke-width="1"/><rect x="0.5" y="0.5" width="27" height="4" fill="#000"/><rect x="1.2" y="1.1" width="3" height="2.8" fill="#fff"/><rect x="5.4" y="9.6" width="17" height="11.6" rx="2" fill="#f0f0f0" stroke="#b8c8e8" stroke-width="1"/></g>
<g transform="translate(1463,277.2)" ><rect x="0.5" y="0.5" width="27" height="26.4" fill="#fff" stroke="#111" stroke-width="1"/><rect x="0.5" y="0.5" width="27" height="4" fill="#000"/><rect x="1.2" y="1.1" width="3" height="2.8" fill="#fff"/><rect x="3" y="8.0" width="3.6" height="2.8" fill="#000"/><rect x="9.2" y="8.0" width="13" height="2.8" fill="#fff" stroke="#333" stroke-width="0.6"/><rect x="3" y="13.6" width="3.6" height="2.8" fill="#000"/><rect x="9.2" y="13.6" width="13" height="2.8" fill="#fff" stroke="#333" stroke-width="0.6"/><rect x="3" y="19.2" width="3.6" height="2.8" fill="#000"/><rect x="9.2" y="19.2" width="13" height="2.8" fill="#fff" stroke="#333" stroke-width="0.6"/></g>
<g transform="translate(1463,323.59999999999997)" ><rect x="0.5" y="0.5" width="27" height="26.4" fill="#fff" stroke="#111" stroke-width="1"/><rect x="0.5" y="0.5" width="27" height="4" fill="#000"/><rect x="1.2" y="1.1" width="3" height="2.8" fill="#fff"/><path d="M6.4,8 H21.6 Q21.6,9.6 19,11.2 L15.4,14.8 V20.4 L12.6,19.2 V14.8 L9,11.2 Q6.4,9.6 6.4,8Z" fill="#8a8a8a" stroke="#555" stroke-width="0.6"/><ellipse cx="14" cy="8" rx="7.6" ry="1.4" fill="#bbb" stroke="#555" stroke-width="0.5"/></g>
<g transform="translate(1463,370.0)" ><rect x="0.5" y="0.5" width="27" height="26.4" fill="#fff" stroke="#111" stroke-width="1"/><rect x="0.5" y="0.5" width="27" height="4" fill="#000"/><rect x="1.2" y="1.1" width="3" height="2.8" fill="#fff"/><path d="M5,8.6 L10,11.2 V17.8 L5,20.4Z" fill="#fff" stroke="#333" stroke-width="0.7"/><rect x="10" y="11.2" width="10.6" height="6.6" rx="0.6" fill="#b9b9b9" stroke="#555" stroke-width="0.6"/><path d="M3,14.5 H23" stroke="#f0a0a0" stroke-width="0.7" stroke-dasharray="2 1"/></g>
<g transform="translate(1463,425.2)" ><rect x="0.5" y="0.5" width="27" height="26.4" fill="#fff" stroke="#111" stroke-width="1"/><rect x="0.5" y="0.5" width="27" height="4" fill="#000"/><rect x="1.2" y="1.1" width="3" height="2.8" fill="#fff"/><path d="M3,8.6 H16 M3,11.6 H14 M3,14.6 H17 M3,17.6 H17" stroke="#888" stroke-width="0.9" stroke-dasharray="3 0.8 5 0.8"/><path d="M1,21.2 H27" stroke="#333" stroke-width="0.6"/><path d="M3,24 H5 M9,24 H22" stroke="#555" stroke-width="1"/></g>
<g transform="translate(1463,472.2)" ><rect x="0.5" y="0.5" width="27" height="26.4" fill="#fff" stroke="#111" stroke-width="1"/><rect x="0.5" y="0.5" width="27" height="4" fill="#000"/><rect x="1.2" y="1.1" width="3" height="2.8" fill="#fff"/><rect x="7.6" y="8.4" width="12.8" height="15" rx="1" fill="#c88a2a" stroke="#8e5a10" stroke-width="0.7"/><rect x="9.4" y="10.4" width="9.2" height="11.4" fill="#f6f6f6"/><rect x="11.4" y="7.4" width="5.2" height="2.8" fill="#8a8a80" stroke="#555" stroke-width="0.4"/><path d="M10.6,14 H17.4 M10.6,16 H17.4 M10.6,18 H15" stroke="#bbb" stroke-width="0.6"/></g>
<g transform="translate(726,821.4)" ><rect x="-8.6" y="-14.4" width="17.2" height="28.8" rx="8.4" fill="#fff" stroke="#333" stroke-width="0.9"/>
<path d="M-8.6,-2.6 Q0,-0.2 8.6,-2.6 M0,-14.4 V-1.6" stroke="#333" stroke-width="0.8" fill="none"/>
<rect x="-1.8" y="-12.6" width="3.6" height="8" rx="1.8" fill="#fff" stroke="#333" stroke-width="0.8"/></g>
<radialGradient id="gClick"><stop offset="0" stop-color="#fff" stop-opacity="0.17"/><stop offset="0.7" stop-color="#fff" stop-opacity="0.12"/><stop offset="1" stop-color="#dfe8f2" stop-opacity="0.08"/></radialGradient>
<circle cx="495.1" cy="96.4" r="35" fill="url(#gClick)"/>
<circle cx="495.1" cy="96.4" r="36.8" fill="none" stroke="#8aa6c8" stroke-opacity="0.22" stroke-width="7"/><circle cx="495.1" cy="96.4" r="36.8" fill="none" stroke="#86a3c6" stroke-opacity="0.36" stroke-width="3.6"/>
<path transform="translate(495.2,97.1)" d="M0,0 L0,21.3 L5.2,16.6 L9.4,26 L13.2,24.4 L9.2,15.3 L14.7,14.6 Z" fill="#fff" stroke="#fff" stroke-opacity="0.85" stroke-width="3.4" stroke-linejoin="round"/>
<path transform="translate(495.2,97.1)" d="M0,0 L0,21.3 L5.2,16.6 L9.4,26 L13.2,24.4 L9.2,15.3 L14.7,14.6 Z" fill="#fff" stroke="#000" stroke-width="1.35" stroke-linejoin="miter"/></svg>
</body></html>
